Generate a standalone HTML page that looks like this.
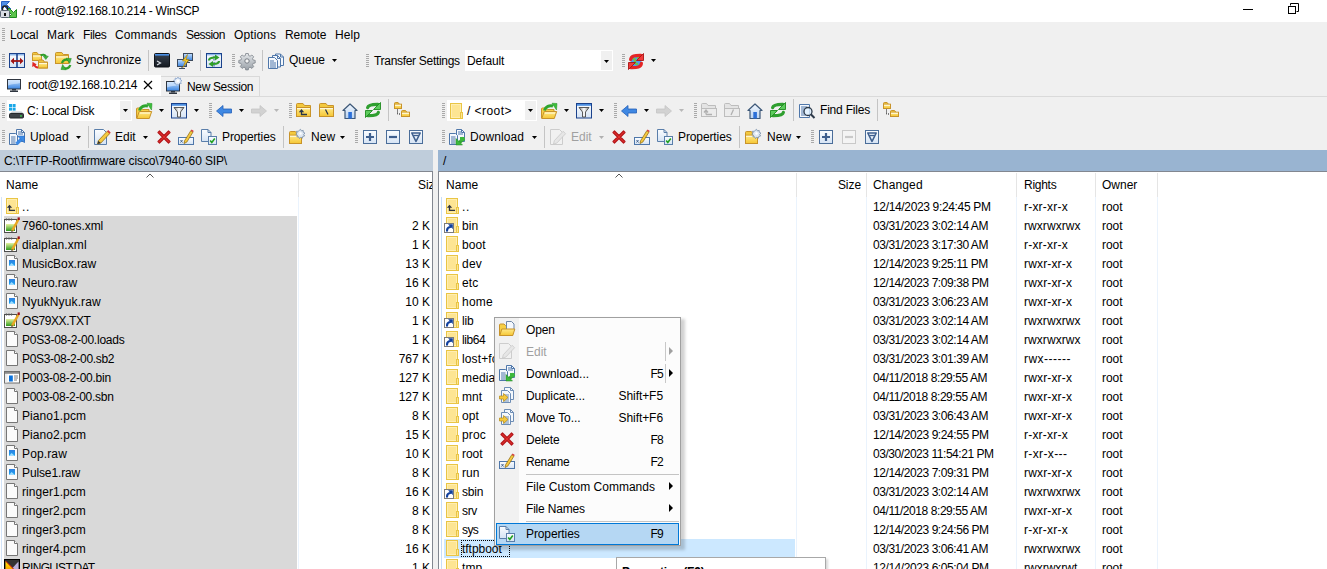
<!DOCTYPE html>
<html><head><meta charset="utf-8"><style>
html,body{margin:0;padding:0;}
body{width:1327px;height:569px;overflow:hidden;position:relative;background:#fff;font-family:"Liberation Sans", sans-serif;font-size:12px;color:#000;}
.t{position:absolute;white-space:nowrap;line-height:14px;height:14px;}
.r{position:absolute;}
.i{position:absolute;overflow:visible;}
</style></head><body>
<svg width="0" height="0" style="position:absolute"><defs>
<linearGradient id="gF" x1="0" y1="0" x2="0" y2="1"><stop offset="0" stop-color="#ffe98a"/><stop offset="1" stop-color="#f5c633"/></linearGradient>
<linearGradient id="gFL" x1="0" y1="0" x2="0" y2="1"><stop offset="0" stop-color="#fff0b5"/><stop offset="1" stop-color="#fbd96b"/></linearGradient>
<linearGradient id="gB" x1="0" y1="0" x2="0" y2="1"><stop offset="0" stop-color="#fbfdff"/><stop offset="1" stop-color="#d5e3f4"/></linearGradient>
<linearGradient id="gG" x1="0" y1="0" x2="0" y2="1"><stop offset="0" stop-color="#e4e7ea"/><stop offset="1" stop-color="#9aa1a8"/></linearGradient>
<linearGradient id="gM" x1="0" y1="0" x2="0" y2="1"><stop offset="0" stop-color="#c4e0ff"/><stop offset="1" stop-color="#3a84e0"/></linearGradient>
<linearGradient id="gT" x1="0" y1="0" x2="0" y2="1"><stop offset="0" stop-color="#3a4452"/><stop offset="1" stop-color="#151a21"/></linearGradient>
<linearGradient id="gFun" x1="0" y1="0" x2="1" y2="0"><stop offset="0" stop-color="#888"/><stop offset="0.5" stop-color="#fff"/><stop offset="1" stop-color="#888"/></linearGradient>
<linearGradient id="gH" x1="0" y1="0" x2="0" y2="1"><stop offset="0" stop-color="#f2f7fd"/><stop offset="1" stop-color="#b9d3f1"/></linearGradient>
<linearGradient id="gGr" x1="0" y1="0" x2="0" y2="1"><stop offset="0" stop-color="#7ee06a"/><stop offset="1" stop-color="#1f9a1f"/></linearGradient>
</defs></svg>
<div class="r" style="left:0px;top:0px;width:1327px;height:22px;background:#fff;"></div>
<svg class="i" style="left:0px;top:0px;" width="17" height="19" viewBox="0 0 17 19"><path d="M1.5 1.5h8l-3 3 4.5 4.5-2 2-4.5-4.5-3 3z" fill="#4f8fe8" stroke="#2a62c4"/><path d="M16.5 17.5h-8l3-3-4.5-4.5 2-2 4.5 4.5 3-3z" fill="#5cc44c" stroke="#1f8a1f"/><path d="M2.5 10.5v-2a2.5 2.5 0 0 1 5 0v2" fill="none" stroke="#222" stroke-width="1.5"/><rect x="0.5" y="10.5" width="9" height="7" rx="1" fill="#d8dce3" stroke="#5a6474"/><rect x="4" y="13" width="2" height="3" fill="#111"/></svg>
<div class="t" style="left:22px;top:4px;letter-spacing:-0.282px;">/ - root@192.168.10.214 - WinSCP</div>
<div class="r" style="left:1243px;top:9px;width:10px;height:1px;background:#000;"></div>
<svg class="i" style="left:1287px;top:3px;" width="13" height="12" viewBox="0 0 13 12"><path d="M3.5 2.5v-2h8v8h-2" fill="none" stroke="#000"/><rect x="1.5" y="3.5" width="7" height="7" fill="none" stroke="#000"/></svg>
<div class="r" style="left:0px;top:22px;width:1327px;height:75px;background:#f0f0f0;"></div>
<svg class="i" style="left:2px;top:28px;" width="3" height="13" viewBox="0 0 3 13"><rect x="0" y="0" width="3" height="1" fill="#a9a9a9"/><rect x="0" y="2" width="3" height="1" fill="#a9a9a9"/><rect x="0" y="4" width="3" height="1" fill="#a9a9a9"/><rect x="0" y="6" width="3" height="1" fill="#a9a9a9"/><rect x="0" y="8" width="3" height="1" fill="#a9a9a9"/><rect x="0" y="10" width="3" height="1" fill="#a9a9a9"/><rect x="0" y="12" width="3" height="1" fill="#a9a9a9"/></svg>
<div class="t" style="left:10px;top:28px;letter-spacing:-0.077px;">Local</div>
<div class="t" style="left:47px;top:28px;letter-spacing:0.207px;">Mark</div>
<div class="t" style="left:83px;top:28px;letter-spacing:-0.369px;">Files</div>
<div class="t" style="left:115px;top:28px;letter-spacing:0.105px;">Commands</div>
<div class="t" style="left:186px;top:28px;letter-spacing:-0.555px;">Session</div>
<div class="t" style="left:234px;top:28px;letter-spacing:0.108px;">Options</div>
<div class="t" style="left:285px;top:28px;letter-spacing:-0.103px;">Remote</div>
<div class="t" style="left:335px;top:28px;letter-spacing:0.078px;">Help</div>
<svg class="i" style="left:2px;top:54px;" width="3" height="14" viewBox="0 0 3 14"><rect x="0" y="0" width="3" height="1" fill="#a9a9a9"/><rect x="0" y="2" width="3" height="1" fill="#a9a9a9"/><rect x="0" y="4" width="3" height="1" fill="#a9a9a9"/><rect x="0" y="6" width="3" height="1" fill="#a9a9a9"/><rect x="0" y="8" width="3" height="1" fill="#a9a9a9"/><rect x="0" y="10" width="3" height="1" fill="#a9a9a9"/><rect x="0" y="12" width="3" height="1" fill="#a9a9a9"/></svg>
<svg class="i" style="left:9px;top:53px;" width="16" height="16" viewBox="0 0 16 16"><rect x="0.5" y="0.5" width="15" height="14" fill="url(#gB)" stroke="#1b428c"/><rect x="1" y="1" width="14" height="1.5" fill="#8fb8ea"/><path d="M8 1v13.5" stroke="#1b428c" stroke-width="1.6"/><path d="M4 8h8" stroke="#a01414" stroke-width="1.8"/><path d="M1.5 8l3.5-3.2v6.4zM14.5 8l-3.5-3.2v6.4z" fill="#a01414"/></svg>
<svg class="i" style="left:32px;top:53px;" width="16" height="16" viewBox="0 0 16 16"><g transform="translate(0,-1)"><path d="M0.5 8.5V1.5q0-1 1-1h3.5l1.5 2H9.5V8.5z" fill="#f3c93e" stroke="#c8932a"/><rect x="0.5" y="2.9" width="9" height="5.6" fill="url(#gF)" stroke="#c8932a"/><rect x="1" y="3.4" width="8" height="1.2" fill="#fff8d8"/></g><g transform="translate(6,6.5)"><path d="M0.5 8.5V1.5q0-1 1-1h3.5l1.5 2H9.5V8.5z" fill="#f3c93e" stroke="#c8932a"/><rect x="0.5" y="2.9" width="9" height="5.6" fill="url(#gF)" stroke="#c8932a"/><rect x="1" y="3.4" width="8" height="1.2" fill="#fff8d8"/></g><path d="M8.5 2.5C10.5 1.3 13 1.3 14 3.5" stroke="#2f9e2a" stroke-width="2" fill="none"/><path d="M11.3 3.2h5l-2.5 3.3z" fill="#3cb33c" stroke="#1f8a1f" stroke-width="0.5"/><path d="M6 14.5C4 14.5 2.8 13.5 2 11.5" stroke="#e02626" stroke-width="2" fill="none"/><path d="M0.2 14l0.3-5.2 4.2 2.6z" fill="#e02626"/></svg>
<svg class="i" style="left:55px;top:53px;" width="16" height="16" viewBox="0 0 16 16"><g transform="translate(0,-1)"><path d="M0.5 11.5V1.5q0-1 1-1h5.3l1.5 2H13.5V11.5z" fill="#f3c93e" stroke="#c8932a"/><rect x="0.5" y="3.8" width="13" height="7.7" fill="url(#gF)" stroke="#c8932a"/><rect x="1" y="4.3" width="12" height="1.2" fill="#fff8d8"/></g><path d="M7 10C8 6.8 11 6 13.5 7" stroke="#2f9e2a" stroke-width="2.4" fill="none"/><path d="M11 5.2l5.3 0.3-1.6 5z" fill="#3cb33c" stroke="#1f8a1f" stroke-width="0.5"/><path d="M15.3 12C14.3 15.2 11.3 16 8.8 15" stroke="#2f9e2a" stroke-width="2.4" fill="none"/><path d="M11.3 16.8l-5.3-0.3 1.6-5z" fill="#3cb33c" stroke="#1f8a1f" stroke-width="0.5"/></svg>
<div class="t" style="left:76px;top:53px;letter-spacing:-0.094px;">Synchronize</div>
<div class="r" style="left:148px;top:50px;width:1px;height:21px;background:#c4c4c4;"></div>
<svg class="i" style="left:154px;top:53px;" width="16" height="16" viewBox="0 0 16 16"><rect x="0.5" y="0.5" width="15" height="13.5" rx="1" fill="url(#gT)" stroke="#10151b"/><rect x="1" y="1" width="14" height="1.6" fill="#4a90e6"/><path d="M3 8l3.5 2-3.5 2" stroke="#d8dde3" stroke-width="1.2" fill="none"/></svg>
<svg class="i" style="left:177px;top:53px;" width="16" height="16" viewBox="0 0 16 16"><rect x="6.5" y="0.5" width="9" height="7" fill="url(#gM)" stroke="#3d4a5c"/><path d="M10 8v1.5h3" stroke="#3d4a5c"/><rect x="0.5" y="6.5" width="9" height="7" fill="url(#gM)" stroke="#3d4a5c"/><path d="M5 14v1M2 15.5h6" stroke="#3d4a5c"/><path d="M10.5 1.5l-5 6.5h3l-2.5 6.5 6-8h-3z" fill="#f7cc2a" stroke="#a77d08" stroke-width="0.6"/></svg>
<div class="r" style="left:200px;top:50px;width:1px;height:21px;background:#c4c4c4;"></div>
<svg class="i" style="left:206px;top:53px;" width="16" height="16" viewBox="0 0 16 16"><rect x="0.5" y="0.5" width="15" height="14" fill="url(#gB)" stroke="#1b428c"/><rect x="1" y="1" width="14" height="1.4" fill="#8fb8ea"/><path d="M8 3v11" stroke="#2c4f90" stroke-dasharray="1.5 1.5"/><path d="M3 7.5c0-2 2-3 6-3" stroke="#2f9e2a" stroke-width="2.2" fill="none"/><path d="M9 1.5l4.5 3-4.5 3z" fill="#2f9e2a"/><path d="M13 8c0 2-2 3-6 3" stroke="#2f9e2a" stroke-width="2.2" fill="none"/><path d="M7 8l-4.5 3 4.5 3z" fill="#2f9e2a"/></svg>
<svg class="i" style="left:232px;top:54px;" width="3" height="14" viewBox="0 0 3 14"><rect x="0" y="0" width="3" height="1" fill="#a9a9a9"/><rect x="0" y="2" width="3" height="1" fill="#a9a9a9"/><rect x="0" y="4" width="3" height="1" fill="#a9a9a9"/><rect x="0" y="6" width="3" height="1" fill="#a9a9a9"/><rect x="0" y="8" width="3" height="1" fill="#a9a9a9"/><rect x="0" y="10" width="3" height="1" fill="#a9a9a9"/><rect x="0" y="12" width="3" height="1" fill="#a9a9a9"/></svg>
<svg class="i" style="left:239px;top:53px;" width="16" height="16" viewBox="0 0 16 16"><g transform="translate(8,8)"><path d="M-1.3-7.5h2.6l0.4 2.1 1.4 0.6 1.8-1.2 1.8 1.8-1.2 1.8 0.6 1.4 2.1 0.4v2.6l-2.1 0.4-0.6 1.4 1.2 1.8-1.8 1.8-1.8-1.2-1.4 0.6-0.4 2.1h-2.6l-0.4-2.1-1.4-0.6-1.8 1.2-1.8-1.8 1.2-1.8-0.6-1.4-2.1-0.4v-2.6l2.1-0.4 0.6-1.4-1.2-1.8 1.8-1.8 1.8 1.2 1.4-0.6z" fill="url(#gG)" stroke="#7d848c" stroke-width="0.8"/><circle r="2.2" fill="#f4f4f4" stroke="#6c737b" stroke-width="0.9"/></g></svg>
<div class="r" style="left:262px;top:50px;width:1px;height:21px;background:#c4c4c4;"></div>
<svg class="i" style="left:268px;top:53px;" width="16" height="16" viewBox="0 0 16 16"><g transform="translate(7,0.5)"><path d="M0.5 0.5h5l3 3v8.5h-8z" fill="#f4f8fd" stroke="#4f77aa"/><path d="M5.5 0.5v3h3" fill="none" stroke="#4f77aa"/></g><g transform="translate(4,2)"><path d="M0.5 0.5h5l3 3v8.5h-8z" fill="#f4f8fd" stroke="#4f77aa"/><path d="M5.5 0.5v3h3" fill="none" stroke="#4f77aa"/></g><path d="M0.5 4.5h6l3 3v8h-9z" fill="#f4f8fd" stroke="#4f77aa"/><path d="M2 8h4M2 10h6M2 12h6M2 14h6" stroke="#4f77aa"/></svg>
<div class="t" style="left:289px;top:53px;">Queue</div>
<svg class="i" style="left:332px;top:59px;" width="5" height="3" viewBox="0 0 5 3"><path d="M0 0h5l-2.5 3z" fill="#000"/></svg>
<svg class="i" style="left:366px;top:54px;" width="3" height="14" viewBox="0 0 3 14"><rect x="0" y="0" width="3" height="1" fill="#a9a9a9"/><rect x="0" y="2" width="3" height="1" fill="#a9a9a9"/><rect x="0" y="4" width="3" height="1" fill="#a9a9a9"/><rect x="0" y="6" width="3" height="1" fill="#a9a9a9"/><rect x="0" y="8" width="3" height="1" fill="#a9a9a9"/><rect x="0" y="10" width="3" height="1" fill="#a9a9a9"/><rect x="0" y="12" width="3" height="1" fill="#a9a9a9"/></svg>
<div class="t" style="left:374px;top:54px;letter-spacing:-0.306px;">Transfer Settings</div>
<div class="r" style="left:465px;top:50px;width:148px;height:21px;background:#fff;"></div>
<div class="r" style="left:601px;top:51px;width:11px;height:19px;background:#f0f0f0;"></div>
<svg class="i" style="left:604px;top:60px;" width="5" height="3" viewBox="0 0 5 3"><path d="M0 0h5l-2.5 3z" fill="#000"/></svg>
<div class="t" style="left:467px;top:54px;letter-spacing:-0.097px;">Default</div>
<svg class="i" style="left:622px;top:54px;" width="3" height="14" viewBox="0 0 3 14"><rect x="0" y="0" width="3" height="1" fill="#a9a9a9"/><rect x="0" y="2" width="3" height="1" fill="#a9a9a9"/><rect x="0" y="4" width="3" height="1" fill="#a9a9a9"/><rect x="0" y="6" width="3" height="1" fill="#a9a9a9"/><rect x="0" y="8" width="3" height="1" fill="#a9a9a9"/><rect x="0" y="10" width="3" height="1" fill="#a9a9a9"/><rect x="0" y="12" width="3" height="1" fill="#a9a9a9"/></svg>
<svg class="i" style="left:628px;top:53px;" width="16" height="16" viewBox="0 0 16 16"><circle cx="8" cy="8.5" r="5.3" fill="#4f9cf0"/><path d="M4.5 6c1.5-0.5 3 0.5 2.5 2.5s1.5 3 3 2M9.5 4c0.5 1.5 2.5 1.5 3 3.5" stroke="#6cc24a" stroke-width="2.4" fill="none"/><path d="M2.6 6.6C3.2 2.8 6.5 2.2 13 2.3" stroke="#e42525" stroke-width="3.2" fill="none" stroke-linecap="round"/><path d="M15.5 0.5v7h-7z" fill="#f03a3a" stroke="#a81414" stroke-width="0.9" stroke-linejoin="round"/><path d="M13.4 10.4C12.8 14.2 9.5 14.8 3 14.7" stroke="#e42525" stroke-width="3.2" fill="none" stroke-linecap="round"/><path d="M0.5 16.5v-7h7z" fill="#f03a3a" stroke="#a81414" stroke-width="0.9" stroke-linejoin="round"/></svg>
<svg class="i" style="left:651px;top:59px;" width="5" height="3" viewBox="0 0 5 3"><path d="M0 0h5l-2.5 3z" fill="#000"/></svg>
<div class="r" style="left:0px;top:75px;width:161px;height:22px;background:#fff;"></div>
<svg class="i" style="left:7px;top:79px;" width="14" height="14" viewBox="0 0 14 14"><rect x="0.5" y="0.5" width="13" height="9.5" fill="url(#gM)" stroke="#2f3640"/><path d="M1 1h12v3c-4 1.5-8 0.5-12 2.5z" fill="#e3f0ff" opacity="0.55"/><rect x="5" y="10" width="4" height="1.5" fill="#2f3640"/><rect x="3" y="11.5" width="8" height="1.5" fill="#2f3640"/></svg>
<div class="t" style="left:28px;top:78px;letter-spacing:-0.381px;">root@192.168.10.214</div>
<svg class="i" style="left:143px;top:80px;" width="10" height="10" viewBox="0 0 10 10"><path d="M1 1l8 8M9 1l-8 8" stroke="#000" stroke-width="1.2"/></svg>
<div class="r" style="left:161px;top:76px;width:99px;height:21px;background:#f0f0f0;box-sizing:border-box;border:1px solid #d9d9d9;border-left:none;"></div>
<svg class="i" style="left:166px;top:81px;" width="16" height="14" viewBox="0 0 16 14"><rect x="0.5" y="0.5" width="13" height="9.5" fill="url(#gM)" stroke="#2f3640"/><path d="M1 1h12v3c-4 1.5-8 0.5-12 2.5z" fill="#e3f0ff" opacity="0.55"/><rect x="5" y="10" width="4" height="1.5" fill="#2f3640"/><rect x="3" y="11.5" width="8" height="1.5" fill="#2f3640"/><g transform="translate(8,-4)"><path d="M4 0l0.8 1.6 1.8-0.6-0.3 1.8 1.7 0.9-1.5 1.1 0.8 1.7-1.9 0-0.5 1.8-1.3-1.3-1.4 1.2-0.3-1.8-1.9-0.2 0.9-1.6-1.4-1.2 1.8-0.6-0.1-1.8 1.7 0.7z" fill="#e8f0fa" stroke="#6d8fbf" stroke-width="0.6"/><circle cx="4" cy="4" r="1.3" fill="#fff"/></g></svg>
<div class="t" style="left:187px;top:80px;letter-spacing:-0.357px;">New Session</div>
<div class="r" style="left:0px;top:96px;width:1327px;height:1px;background:#dadada;"></div>
<div class="r" style="left:0px;top:97px;width:1327px;height:53px;background:#f0f0f0;"></div>
<svg class="i" style="left:2px;top:103px;" width="3" height="15" viewBox="0 0 3 15"><rect x="0" y="0" width="3" height="1" fill="#a9a9a9"/><rect x="0" y="2" width="3" height="1" fill="#a9a9a9"/><rect x="0" y="4" width="3" height="1" fill="#a9a9a9"/><rect x="0" y="6" width="3" height="1" fill="#a9a9a9"/><rect x="0" y="8" width="3" height="1" fill="#a9a9a9"/><rect x="0" y="10" width="3" height="1" fill="#a9a9a9"/><rect x="0" y="12" width="3" height="1" fill="#a9a9a9"/><rect x="0" y="14" width="3" height="1" fill="#a9a9a9"/></svg>
<div class="r" style="left:7px;top:100px;width:125px;height:21px;background:#fff;"></div>
<div class="r" style="left:120px;top:101px;width:11px;height:19px;background:#f0f0f0;"></div>
<svg class="i" style="left:123px;top:109px;" width="5" height="3" viewBox="0 0 5 3"><path d="M0 0h5l-2.5 3z" fill="#000"/></svg>
<svg class="i" style="left:8px;top:103px;" width="16" height="16" viewBox="0 0 16 16"><rect x="1" y="1" width="3" height="3" fill="#1aa7e8"/><rect x="4.6" y="1" width="3" height="3" fill="#1aa7e8"/><rect x="1" y="4.6" width="3" height="3" fill="#1aa7e8"/><rect x="4.6" y="4.6" width="3" height="3" fill="#1aa7e8"/><path d="M2 10.5l2-2h9.5l2 2z" fill="#c4c8cc"/><rect x="1.5" y="10.5" width="14" height="4.5" rx="1" fill="#3e4247" stroke="#26292d"/><rect x="12" y="12.3" width="2" height="1.3" fill="#3ad14e"/></svg>
<div class="t" style="left:27px;top:104px;letter-spacing:-0.261px;">C: Local Disk</div>
<svg class="i" style="left:136px;top:103px;" width="16" height="16" viewBox="0 0 16 16"><path d="M0.5 15V6q0-1 1-1h3.5l1.5 1.5h6.5v8.5z" fill="#f7cf45" stroke="#c8932a"/><path d="M0.8 15.5l2.4-7h12.5l-2.4 7z" fill="url(#gF)" stroke="#c8932a"/><rect x="4" y="9.5" width="10" height="1.2" fill="#fff6cf"/><path d="M3.5 7.5c1-4 5-5.5 8.5-4.5" stroke="#2ea52e" stroke-width="3" fill="none"/><path d="M11 0.2l5 0.3-0.5 6.5z" fill="#3bbf3b" stroke="#1d8a1d" stroke-width="0.5"/></svg>
<svg class="i" style="left:159px;top:109px;" width="5" height="3" viewBox="0 0 5 3"><path d="M0 0h5l-2.5 3z" fill="#000"/></svg>
<svg class="i" style="left:171px;top:103px;" width="16" height="16" viewBox="0 0 16 16"><rect x="0.5" y="0.5" width="15" height="14.5" fill="url(#gB)" stroke="#1b428c"/><rect x="1" y="1" width="14" height="1.8" fill="#4d8fe0"/><path d="M3 4.5h10l-3.5 4.5v5h-3v-5z" fill="url(#gFun)" stroke="#4a4a4a" stroke-width="0.9"/></svg>
<svg class="i" style="left:194px;top:109px;" width="5" height="3" viewBox="0 0 5 3"><path d="M0 0h5l-2.5 3z" fill="#000"/></svg>
<svg class="i" style="left:209px;top:103px;" width="3" height="15" viewBox="0 0 3 15"><rect x="0" y="0" width="3" height="1" fill="#a9a9a9"/><rect x="0" y="2" width="3" height="1" fill="#a9a9a9"/><rect x="0" y="4" width="3" height="1" fill="#a9a9a9"/><rect x="0" y="6" width="3" height="1" fill="#a9a9a9"/><rect x="0" y="8" width="3" height="1" fill="#a9a9a9"/><rect x="0" y="10" width="3" height="1" fill="#a9a9a9"/><rect x="0" y="12" width="3" height="1" fill="#a9a9a9"/><rect x="0" y="14" width="3" height="1" fill="#a9a9a9"/></svg>
<svg class="i" style="left:216px;top:103px;" width="16" height="16" viewBox="0 0 16 16"><path d="M0.5 8l6.5-5.5v3.5h8.5v4h-8.5v3.5z" fill="#3f88e3" stroke="#2360b8" stroke-width="0.8"/></svg>
<svg class="i" style="left:239px;top:109px;" width="5" height="3" viewBox="0 0 5 3"><path d="M0 0h5l-2.5 3z" fill="#000"/></svg>
<svg class="i" style="left:251px;top:103px;" width="16" height="16" viewBox="0 0 16 16"><path d="M15.5 8l-6.5-5.5v3.5h-8.5v4h8.5v3.5z" fill="#d2d2d2" stroke="#c4c4c4" stroke-width="0.8"/></svg>
<svg class="i" style="left:274px;top:109px;" width="5" height="3" viewBox="0 0 5 3"><path d="M0 0h5l-2.5 3z" fill="#b8b8b8"/></svg>
<svg class="i" style="left:289px;top:103px;" width="3" height="15" viewBox="0 0 3 15"><rect x="0" y="0" width="3" height="1" fill="#a9a9a9"/><rect x="0" y="2" width="3" height="1" fill="#a9a9a9"/><rect x="0" y="4" width="3" height="1" fill="#a9a9a9"/><rect x="0" y="6" width="3" height="1" fill="#a9a9a9"/><rect x="0" y="8" width="3" height="1" fill="#a9a9a9"/><rect x="0" y="10" width="3" height="1" fill="#a9a9a9"/><rect x="0" y="12" width="3" height="1" fill="#a9a9a9"/><rect x="0" y="14" width="3" height="1" fill="#a9a9a9"/></svg>
<svg class="i" style="left:296px;top:103px;" width="16" height="16" viewBox="0 0 16 16"><g transform="translate(0,0)"><path d="M0.5 13.5V1.5q0-1 1-1h5.5l1.5 2H14.5V13.5z" fill="#f3c93e" stroke="#c8932a"/><rect x="0.5" y="4.5" width="14" height="9.0" fill="url(#gF)" stroke="#c8932a"/><rect x="1" y="5.0" width="13" height="1.2" fill="#fff8d8"/></g><path d="M2.8 9.2L5.5 6 8.2 9.2z" fill="#27344a"/><path d="M5.5 8V11.5H11" stroke="#27344a" stroke-width="1.3" fill="none"/></svg>
<svg class="i" style="left:319px;top:103px;" width="16" height="16" viewBox="0 0 16 16"><g transform="translate(0,0)"><path d="M0.5 13.5V1.5q0-1 1-1h5.5l1.5 2H14.5V13.5z" fill="#f3c93e" stroke="#c8932a"/><rect x="0.5" y="4.5" width="14" height="9.0" fill="url(#gF)" stroke="#c8932a"/><rect x="1" y="5.0" width="13" height="1.2" fill="#fff8d8"/></g><path d="M6.5 6.5l2.5 5" stroke="#27344a" stroke-width="1.3"/></svg>
<svg class="i" style="left:342px;top:103px;" width="16" height="16" viewBox="0 0 16 16"><path d="M8 1l7 6.5h-2v8h-10v-8h-2z" fill="url(#gH)" stroke="#3d5878" stroke-width="1.2" stroke-linejoin="round"/><rect x="6.3" y="9" width="3.6" height="6.5" fill="#2b6fd8"/></svg>
<svg class="i" style="left:365px;top:102px;" width="16" height="16" viewBox="0 0 16 16"><path d="M2.6 5.6C3.2 2.8 6.5 2.2 13 2.3" stroke="#2f9f2f" stroke-width="3.2" fill="none" stroke-linecap="round"/><path d="M15.5 0.5v7h-7z" fill="#5ccc5c" stroke="#1f8a1f" stroke-width="0.9" stroke-linejoin="round"/><path d="M13.4 10.4C12.8 13.2 9.5 13.8 3 13.7" stroke="#2f9f2f" stroke-width="3.2" fill="none" stroke-linecap="round"/><path d="M0.5 15.5v-7h7z" fill="#5ccc5c" stroke="#1f8a1f" stroke-width="0.9" stroke-linejoin="round"/></svg>
<div class="r" style="left:388px;top:99px;width:1px;height:22px;background:#c4c4c4;"></div>
<svg class="i" style="left:394px;top:102px;" width="16" height="16" viewBox="0 0 16 16"><g transform="translate(0,0)"><path d="M0.5 6.5V1.5q0-1 1-1h2.6l1.5 2H7.5V6.5z" fill="#f3c93e" stroke="#c8932a"/><rect x="0.5" y="2.2" width="7" height="4.3" fill="url(#gF)" stroke="#c8932a"/><rect x="1" y="2.7" width="6" height="1.2" fill="#fff8d8"/></g><g transform="translate(7,8)"><path d="M0.5 6.5V1.5q0-1 1-1h3.05l1.5 2H8.5V6.5z" fill="#f3c93e" stroke="#c8932a"/><rect x="0.5" y="2.2" width="8" height="4.3" fill="url(#gF)" stroke="#c8932a"/><rect x="1" y="2.7" width="7" height="1.2" fill="#fff8d8"/></g><path d="M3.5 7.5v4.5h3.5" stroke="#111" stroke-dasharray="1 1" fill="none"/></svg>
<svg class="i" style="left:442px;top:103px;" width="3" height="15" viewBox="0 0 3 15"><rect x="0" y="0" width="3" height="1" fill="#a9a9a9"/><rect x="0" y="2" width="3" height="1" fill="#a9a9a9"/><rect x="0" y="4" width="3" height="1" fill="#a9a9a9"/><rect x="0" y="6" width="3" height="1" fill="#a9a9a9"/><rect x="0" y="8" width="3" height="1" fill="#a9a9a9"/><rect x="0" y="10" width="3" height="1" fill="#a9a9a9"/><rect x="0" y="12" width="3" height="1" fill="#a9a9a9"/><rect x="0" y="14" width="3" height="1" fill="#a9a9a9"/></svg>
<div class="r" style="left:447px;top:100px;width:90px;height:21px;background:#fff;"></div>
<div class="r" style="left:525px;top:101px;width:11px;height:19px;background:#f0f0f0;"></div>
<svg class="i" style="left:528px;top:109px;" width="5" height="3" viewBox="0 0 5 3"><path d="M0 0h5l-2.5 3z" fill="#000"/></svg>
<svg class="i" style="left:450px;top:103px;" width="16" height="16" viewBox="0 0 16 16"><rect x="0.5" y="0.5" width="11" height="15" fill="#fde593" stroke="#e9c545"/><rect x="1.5" y="1.5" width="9" height="13" fill="none" stroke="#fff0b8" stroke-width="0.8"/><rect x="10.5" y="9.5" width="2" height="6" fill="#fde593" stroke="#e9c545"/></svg>
<div class="t" style="left:467px;top:104px;letter-spacing:0.455px;">/ &lt;root&gt;</div>
<svg class="i" style="left:541px;top:103px;" width="16" height="16" viewBox="0 0 16 16"><path d="M0.5 15V6q0-1 1-1h3.5l1.5 1.5h6.5v8.5z" fill="#f7cf45" stroke="#c8932a"/><path d="M0.8 15.5l2.4-7h12.5l-2.4 7z" fill="url(#gF)" stroke="#c8932a"/><rect x="4" y="9.5" width="10" height="1.2" fill="#fff6cf"/><path d="M3.5 7.5c1-4 5-5.5 8.5-4.5" stroke="#2ea52e" stroke-width="3" fill="none"/><path d="M11 0.2l5 0.3-0.5 6.5z" fill="#3bbf3b" stroke="#1d8a1d" stroke-width="0.5"/></svg>
<svg class="i" style="left:564px;top:109px;" width="5" height="3" viewBox="0 0 5 3"><path d="M0 0h5l-2.5 3z" fill="#000"/></svg>
<svg class="i" style="left:576px;top:103px;" width="16" height="16" viewBox="0 0 16 16"><rect x="0.5" y="0.5" width="15" height="14.5" fill="url(#gB)" stroke="#1b428c"/><rect x="1" y="1" width="14" height="1.8" fill="#4d8fe0"/><path d="M3 4.5h10l-3.5 4.5v5h-3v-5z" fill="url(#gFun)" stroke="#4a4a4a" stroke-width="0.9"/></svg>
<svg class="i" style="left:599px;top:109px;" width="5" height="3" viewBox="0 0 5 3"><path d="M0 0h5l-2.5 3z" fill="#000"/></svg>
<svg class="i" style="left:614px;top:103px;" width="3" height="15" viewBox="0 0 3 15"><rect x="0" y="0" width="3" height="1" fill="#a9a9a9"/><rect x="0" y="2" width="3" height="1" fill="#a9a9a9"/><rect x="0" y="4" width="3" height="1" fill="#a9a9a9"/><rect x="0" y="6" width="3" height="1" fill="#a9a9a9"/><rect x="0" y="8" width="3" height="1" fill="#a9a9a9"/><rect x="0" y="10" width="3" height="1" fill="#a9a9a9"/><rect x="0" y="12" width="3" height="1" fill="#a9a9a9"/><rect x="0" y="14" width="3" height="1" fill="#a9a9a9"/></svg>
<svg class="i" style="left:621px;top:103px;" width="16" height="16" viewBox="0 0 16 16"><path d="M0.5 8l6.5-5.5v3.5h8.5v4h-8.5v3.5z" fill="#3f88e3" stroke="#2360b8" stroke-width="0.8"/></svg>
<svg class="i" style="left:644px;top:109px;" width="5" height="3" viewBox="0 0 5 3"><path d="M0 0h5l-2.5 3z" fill="#000"/></svg>
<svg class="i" style="left:656px;top:103px;" width="16" height="16" viewBox="0 0 16 16"><path d="M15.5 8l-6.5-5.5v3.5h-8.5v4h8.5v3.5z" fill="#d2d2d2" stroke="#c4c4c4" stroke-width="0.8"/></svg>
<svg class="i" style="left:679px;top:109px;" width="5" height="3" viewBox="0 0 5 3"><path d="M0 0h5l-2.5 3z" fill="#b8b8b8"/></svg>
<svg class="i" style="left:694px;top:103px;" width="3" height="15" viewBox="0 0 3 15"><rect x="0" y="0" width="3" height="1" fill="#a9a9a9"/><rect x="0" y="2" width="3" height="1" fill="#a9a9a9"/><rect x="0" y="4" width="3" height="1" fill="#a9a9a9"/><rect x="0" y="6" width="3" height="1" fill="#a9a9a9"/><rect x="0" y="8" width="3" height="1" fill="#a9a9a9"/><rect x="0" y="10" width="3" height="1" fill="#a9a9a9"/><rect x="0" y="12" width="3" height="1" fill="#a9a9a9"/><rect x="0" y="14" width="3" height="1" fill="#a9a9a9"/></svg>
<svg class="i" style="left:701px;top:103px;" width="16" height="16" viewBox="0 0 16 16"><g transform="translate(0,0)"><path d="M0.5 13.5V1.5q0-1 1-1h4l1.5 2h7.5v11z" fill="#e4e4e4" stroke="#bdbdbd"/><rect x="0.5" y="5.5" width="15" height="8" fill="#ececec" stroke="#bdbdbd"/></g><path d="M5 11.5h6M5 11.5v-3.5M3 9.5l2-2.5 2 2.5" stroke="#b0b0b0" stroke-width="1.3" fill="none"/></svg>
<svg class="i" style="left:724px;top:103px;" width="16" height="16" viewBox="0 0 16 16"><g transform="translate(0,0)"><path d="M0.5 13.5V1.5q0-1 1-1h4l1.5 2h7.5v11z" fill="#e4e4e4" stroke="#bdbdbd"/><rect x="0.5" y="5.5" width="15" height="8" fill="#ececec" stroke="#bdbdbd"/></g><path d="M9.5 6.5l-2.5 5.5" stroke="#b0b0b0" stroke-width="1.3"/></svg>
<svg class="i" style="left:747px;top:103px;" width="16" height="16" viewBox="0 0 16 16"><path d="M8 1l7 6.5h-2v8h-10v-8h-2z" fill="url(#gH)" stroke="#3d5878" stroke-width="1.2" stroke-linejoin="round"/><rect x="6.3" y="9" width="3.6" height="6.5" fill="#2b6fd8"/></svg>
<svg class="i" style="left:770px;top:102px;" width="16" height="16" viewBox="0 0 16 16"><path d="M2.6 5.6C3.2 2.8 6.5 2.2 13 2.3" stroke="#2f9f2f" stroke-width="3.2" fill="none" stroke-linecap="round"/><path d="M15.5 0.5v7h-7z" fill="#5ccc5c" stroke="#1f8a1f" stroke-width="0.9" stroke-linejoin="round"/><path d="M13.4 10.4C12.8 13.2 9.5 13.8 3 13.7" stroke="#2f9f2f" stroke-width="3.2" fill="none" stroke-linecap="round"/><path d="M0.5 15.5v-7h7z" fill="#5ccc5c" stroke="#1f8a1f" stroke-width="0.9" stroke-linejoin="round"/></svg>
<div class="r" style="left:793px;top:99px;width:1px;height:22px;background:#c4c4c4;"></div>
<svg class="i" style="left:799px;top:103px;" width="16" height="16" viewBox="0 0 16 16"><path d="M0.5 1.5h10v13h-10z" fill="#f4f8fd" stroke="#4f77aa"/><path d="M2 4h6M2 6h4M2 8h4M2 10h4M2 12h5" stroke="#4f77aa"/><circle cx="9" cy="8.5" r="4" fill="#dff0ff" fill-opacity="0.8" stroke="#2d3a4a" stroke-width="1.3"/><path d="M11.8 11.3l3.7 3.7" stroke="#2d3a4a" stroke-width="2"/></svg>
<div class="t" style="left:820px;top:103px;letter-spacing:-0.202px;">Find Files</div>
<div class="r" style="left:877px;top:99px;width:1px;height:22px;background:#c4c4c4;"></div>
<svg class="i" style="left:883px;top:102px;" width="16" height="16" viewBox="0 0 16 16"><g transform="translate(0,0)"><path d="M0.5 6.5V1.5q0-1 1-1h2.6l1.5 2H7.5V6.5z" fill="#f3c93e" stroke="#c8932a"/><rect x="0.5" y="2.2" width="7" height="4.3" fill="url(#gF)" stroke="#c8932a"/><rect x="1" y="2.7" width="6" height="1.2" fill="#fff8d8"/></g><g transform="translate(7,8)"><path d="M0.5 6.5V1.5q0-1 1-1h3.05l1.5 2H8.5V6.5z" fill="#f3c93e" stroke="#c8932a"/><rect x="0.5" y="2.2" width="8" height="4.3" fill="url(#gF)" stroke="#c8932a"/><rect x="1" y="2.7" width="7" height="1.2" fill="#fff8d8"/></g><path d="M3.5 7.5v4.5h3.5" stroke="#111" stroke-dasharray="1 1" fill="none"/></svg>
<svg class="i" style="left:2px;top:130px;" width="3" height="14" viewBox="0 0 3 14"><rect x="0" y="0" width="3" height="1" fill="#a9a9a9"/><rect x="0" y="2" width="3" height="1" fill="#a9a9a9"/><rect x="0" y="4" width="3" height="1" fill="#a9a9a9"/><rect x="0" y="6" width="3" height="1" fill="#a9a9a9"/><rect x="0" y="8" width="3" height="1" fill="#a9a9a9"/><rect x="0" y="10" width="3" height="1" fill="#a9a9a9"/><rect x="0" y="12" width="3" height="1" fill="#a9a9a9"/></svg>
<svg class="i" style="left:9px;top:129px;" width="16" height="16" viewBox="0 0 16 16"><path d="M7.5 0.5h5l3 3v9h-8z" fill="#f4f8fd" stroke="#4f77aa"/><path d="M12.5 0.5v3h3" fill="none" stroke="#4f77aa"/><path d="M9 3h3M9 5h5" stroke="#4f77aa"/><path d="M0.5 4.5h6l2 2v9h-8z" fill="#f4f8fd" stroke="#4f77aa"/><path d="M2 8h4.5M2 10h4.5M2 12h4.5M2 14h4.5" stroke="#4f77aa"/><path d="M7.5 15l5-5" stroke="#3c8ae6" stroke-width="3.2"/><path d="M15.5 7v7l-7-7z" fill="#3c8ae6" stroke="#2465b8" stroke-width="0.5"/></svg>
<div class="t" style="left:30px;top:130px;letter-spacing:0.111px;">Upload</div>
<svg class="i" style="left:76px;top:136px;" width="5" height="3" viewBox="0 0 5 3"><path d="M0 0h5l-2.5 3z" fill="#000"/></svg>
<div class="r" style="left:88px;top:126px;width:1px;height:22px;background:#c4c4c4;"></div>
<svg class="i" style="left:94px;top:129px;" width="16" height="16" viewBox="0 0 16 16"><path d="M0.5 0.5h9l3 3v12h-12z" fill="url(#gB)" stroke="#5a7eaa"/><path d="M3.5 15l0.8-3.3 8.8-9.4 2.5 2.4-8.8 9.4z" fill="#f5c93f" stroke="#8a6308" stroke-width="0.7"/><path d="M13.1 2.3l1.1-1.2 2.5 2.4-1.1 1.2z" fill="#d8383a"/><path d="M3.5 15l0.8-3.3 2.5 2.4z" fill="#333"/></svg>
<div class="t" style="left:115px;top:130px;">Edit</div>
<svg class="i" style="left:143px;top:136px;" width="5" height="3" viewBox="0 0 5 3"><path d="M0 0h5l-2.5 3z" fill="#000"/></svg>
<svg class="i" style="left:156px;top:129px;" width="16" height="16" viewBox="0 0 16 16"><path d="M2 3.5l1.5-1.5 4.5 4.5 4.5-4.5 1.5 1.5-4.5 4.5 4.5 4.5-1.5 1.5-4.5-4.5-4.5 4.5-1.5-1.5 4.5-4.5z" fill="#e8302c" stroke="#b3161a" stroke-width="1.2" stroke-linejoin="round"/></svg>
<svg class="i" style="left:178px;top:129px;" width="16" height="16" viewBox="0 0 16 16"><rect x="0.5" y="8.5" width="15" height="7" fill="url(#gB)" stroke="#4f77aa"/><path d="M2.5 11l2 2.5M4.5 11l-2 2.5" stroke="#3a5a86" stroke-width="0.9"/><path d="M6 14.5l0.6-2.8 6.2-10 2.2 1.4-6.2 10z" fill="#f5c93f" stroke="#8a6308" stroke-width="0.7"/><path d="M12.8 1.7l0.8-1.2 2.2 1.4-0.8 1.2z" fill="#d8383a"/></svg>
<svg class="i" style="left:201px;top:129px;" width="16" height="16" viewBox="0 0 16 16"><path d="M0.5 0.5h6.5l3 3v9h-9.5z" fill="url(#gB)" stroke="#5a7eaa"/><path d="M7 0.5v3h3" fill="none" stroke="#5a7eaa"/><rect x="7.5" y="7.5" width="8" height="8" fill="url(#gB)" stroke="#5a7eaa"/><path d="M9.2 11.5l1.6 2 3-4" stroke="#1fa01f" stroke-width="1.6" fill="none"/></svg>
<div class="t" style="left:222px;top:130px;letter-spacing:-0.109px;">Properties</div>
<div class="r" style="left:283px;top:126px;width:1px;height:22px;background:#c4c4c4;"></div>
<svg class="i" style="left:289px;top:129px;" width="16" height="16" viewBox="0 0 16 16"><g transform="translate(0,2)"><path d="M0.5 12.5V1.5q0-1 1-1h4.8500000000000005l1.5 2H12.5V12.5z" fill="#f3c93e" stroke="#c8932a"/><rect x="0.5" y="4.2" width="12" height="8.3" fill="url(#gF)" stroke="#c8932a"/><rect x="1" y="4.7" width="11" height="1.2" fill="#fff8d8"/></g><path d="M11.5 0.3l0.9 1.6 1.8-0.5 0 1.8 1.7 0.8-1.2 1.4 0.9 1.6-1.8 0.4-0.4 1.8-1.6-0.9-1.4 1.2-0.7-1.7-1.8 0.1 0.5-1.8-1.6-0.9 1.4-1.2-0.8-1.7 1.8 0z" fill="#dfe8f3" stroke="#667f9e" stroke-width="0.7"/><circle cx="11.5" cy="4.5" r="1.2" fill="#fff"/></svg>
<div class="t" style="left:311px;top:130px;letter-spacing:0.128px;">New</div>
<svg class="i" style="left:340px;top:136px;" width="5" height="3" viewBox="0 0 5 3"><path d="M0 0h5l-2.5 3z" fill="#000"/></svg>
<svg class="i" style="left:355px;top:130px;" width="3" height="14" viewBox="0 0 3 14"><rect x="0" y="0" width="3" height="1" fill="#a9a9a9"/><rect x="0" y="2" width="3" height="1" fill="#a9a9a9"/><rect x="0" y="4" width="3" height="1" fill="#a9a9a9"/><rect x="0" y="6" width="3" height="1" fill="#a9a9a9"/><rect x="0" y="8" width="3" height="1" fill="#a9a9a9"/><rect x="0" y="10" width="3" height="1" fill="#a9a9a9"/><rect x="0" y="12" width="3" height="1" fill="#a9a9a9"/></svg>
<svg class="i" style="left:363px;top:130px;" width="14" height="14" viewBox="0 0 14 14"><rect x="0.5" y="0.5" width="13" height="13" fill="url(#gB)" stroke="#4a6d99"/><path d="M7 3v8M3 7h8" stroke="#3e5f8e" stroke-width="2.2"/></svg>
<svg class="i" style="left:386px;top:130px;" width="14" height="14" viewBox="0 0 14 14"><rect x="0.5" y="0.5" width="13" height="13" fill="url(#gB)" stroke="#4a6d99"/><path d="M3 7h8" stroke="#3e5f8e" stroke-width="2.2"/></svg>
<svg class="i" style="left:409px;top:130px;" width="14" height="14" viewBox="0 0 14 14"><rect x="0.5" y="0.5" width="13" height="13" fill="url(#gB)" stroke="#4a6d99"/><path d="M2.8 3h8.4l-4.2 8.5z" fill="none" stroke="#3e5f8e" stroke-width="1.6" stroke-linejoin="round"/><path d="M4.3 5.5h5.4" stroke="#3e5f8e" stroke-width="1.3"/></svg>
<svg class="i" style="left:442px;top:130px;" width="3" height="14" viewBox="0 0 3 14"><rect x="0" y="0" width="3" height="1" fill="#a9a9a9"/><rect x="0" y="2" width="3" height="1" fill="#a9a9a9"/><rect x="0" y="4" width="3" height="1" fill="#a9a9a9"/><rect x="0" y="6" width="3" height="1" fill="#a9a9a9"/><rect x="0" y="8" width="3" height="1" fill="#a9a9a9"/><rect x="0" y="10" width="3" height="1" fill="#a9a9a9"/><rect x="0" y="12" width="3" height="1" fill="#a9a9a9"/></svg>
<svg class="i" style="left:449px;top:129px;" width="16" height="16" viewBox="0 0 16 16"><path d="M7.5 0.5h5l3 3v9h-8z" fill="#f4f8fd" stroke="#4f77aa"/><path d="M12.5 0.5v3h3" fill="none" stroke="#4f77aa"/><path d="M9 3h3M9 5h5" stroke="#4f77aa"/><path d="M0.5 4.5h6l2 2v9h-8z" fill="#f4f8fd" stroke="#4f77aa"/><path d="M2 8h4.5M2 10h4.5M2 12h4.5M2 14h4.5" stroke="#4f77aa"/><path d="M15 9l-4.5 4.5" stroke="#36a836" stroke-width="3.2"/><path d="M7 9.5v6.5h6.5z" fill="#3cb83c" stroke="#1d861d" stroke-width="0.5"/><rect x="11" y="8" width="4.5" height="4" fill="#3cb83c"/></svg>
<div class="t" style="left:470px;top:130px;letter-spacing:0.066px;">Download</div>
<svg class="i" style="left:532px;top:136px;" width="5" height="3" viewBox="0 0 5 3"><path d="M0 0h5l-2.5 3z" fill="#000"/></svg>
<div class="r" style="left:544px;top:126px;width:1px;height:22px;background:#c4c4c4;"></div>
<svg class="i" style="left:550px;top:129px;" width="16" height="16" viewBox="0 0 16 16"><g opacity="0.5"><path d="M0.5 0.5h9l3 3v12h-12z" fill="#f2f2f2" stroke="#aaa"/><path d="M3.5 15l0.8-3.3 8.8-9.4 2.5 2.4-8.8 9.4z" fill="#ddd" stroke="#999" stroke-width="0.7"/></g></svg>
<div class="t" style="left:571px;top:130px;color:#a0a0a0;">Edit</div>
<svg class="i" style="left:599px;top:136px;" width="5" height="3" viewBox="0 0 5 3"><path d="M0 0h5l-2.5 3z" fill="#b0b0b0"/></svg>
<svg class="i" style="left:611px;top:129px;" width="16" height="16" viewBox="0 0 16 16"><path d="M2 3.5l1.5-1.5 4.5 4.5 4.5-4.5 1.5 1.5-4.5 4.5 4.5 4.5-1.5 1.5-4.5-4.5-4.5 4.5-1.5-1.5 4.5-4.5z" fill="#e8302c" stroke="#b3161a" stroke-width="1.2" stroke-linejoin="round"/></svg>
<svg class="i" style="left:634px;top:129px;" width="16" height="16" viewBox="0 0 16 16"><rect x="0.5" y="8.5" width="15" height="7" fill="url(#gB)" stroke="#4f77aa"/><path d="M2.5 11l2 2.5M4.5 11l-2 2.5" stroke="#3a5a86" stroke-width="0.9"/><path d="M6 14.5l0.6-2.8 6.2-10 2.2 1.4-6.2 10z" fill="#f5c93f" stroke="#8a6308" stroke-width="0.7"/><path d="M12.8 1.7l0.8-1.2 2.2 1.4-0.8 1.2z" fill="#d8383a"/></svg>
<svg class="i" style="left:657px;top:129px;" width="16" height="16" viewBox="0 0 16 16"><path d="M0.5 0.5h6.5l3 3v9h-9.5z" fill="url(#gB)" stroke="#5a7eaa"/><path d="M7 0.5v3h3" fill="none" stroke="#5a7eaa"/><rect x="7.5" y="7.5" width="8" height="8" fill="url(#gB)" stroke="#5a7eaa"/><path d="M9.2 11.5l1.6 2 3-4" stroke="#1fa01f" stroke-width="1.6" fill="none"/></svg>
<div class="t" style="left:678px;top:130px;letter-spacing:-0.109px;">Properties</div>
<div class="r" style="left:739px;top:126px;width:1px;height:22px;background:#c4c4c4;"></div>
<svg class="i" style="left:745px;top:129px;" width="16" height="16" viewBox="0 0 16 16"><g transform="translate(0,2)"><path d="M0.5 12.5V1.5q0-1 1-1h4.8500000000000005l1.5 2H12.5V12.5z" fill="#f3c93e" stroke="#c8932a"/><rect x="0.5" y="4.2" width="12" height="8.3" fill="url(#gF)" stroke="#c8932a"/><rect x="1" y="4.7" width="11" height="1.2" fill="#fff8d8"/></g><path d="M11.5 0.3l0.9 1.6 1.8-0.5 0 1.8 1.7 0.8-1.2 1.4 0.9 1.6-1.8 0.4-0.4 1.8-1.6-0.9-1.4 1.2-0.7-1.7-1.8 0.1 0.5-1.8-1.6-0.9 1.4-1.2-0.8-1.7 1.8 0z" fill="#dfe8f3" stroke="#667f9e" stroke-width="0.7"/><circle cx="11.5" cy="4.5" r="1.2" fill="#fff"/></svg>
<div class="t" style="left:767px;top:130px;letter-spacing:0.128px;">New</div>
<svg class="i" style="left:796px;top:136px;" width="5" height="3" viewBox="0 0 5 3"><path d="M0 0h5l-2.5 3z" fill="#000"/></svg>
<svg class="i" style="left:811px;top:130px;" width="3" height="14" viewBox="0 0 3 14"><rect x="0" y="0" width="3" height="1" fill="#a9a9a9"/><rect x="0" y="2" width="3" height="1" fill="#a9a9a9"/><rect x="0" y="4" width="3" height="1" fill="#a9a9a9"/><rect x="0" y="6" width="3" height="1" fill="#a9a9a9"/><rect x="0" y="8" width="3" height="1" fill="#a9a9a9"/><rect x="0" y="10" width="3" height="1" fill="#a9a9a9"/><rect x="0" y="12" width="3" height="1" fill="#a9a9a9"/></svg>
<svg class="i" style="left:819px;top:130px;" width="14" height="14" viewBox="0 0 14 14"><rect x="0.5" y="0.5" width="13" height="13" fill="url(#gB)" stroke="#4a6d99"/><path d="M7 3v8M3 7h8" stroke="#3e5f8e" stroke-width="2.2"/></svg>
<svg class="i" style="left:842px;top:130px;" width="14" height="14" viewBox="0 0 14 14"><rect x="0.5" y="0.5" width="13" height="13" fill="#f4f4f4" stroke="#c9c9c9"/><path d="M3 7h8" stroke="#c9c9c9" stroke-width="2.2"/></svg>
<svg class="i" style="left:865px;top:130px;" width="14" height="14" viewBox="0 0 14 14"><rect x="0.5" y="0.5" width="13" height="13" fill="url(#gB)" stroke="#4a6d99"/><path d="M2.8 3h8.4l-4.2 8.5z" fill="none" stroke="#3e5f8e" stroke-width="1.6" stroke-linejoin="round"/><path d="M4.3 5.5h5.4" stroke="#3e5f8e" stroke-width="1.3"/></svg>
<div class="r" style="left:0px;top:150px;width:433px;height:21px;background:#bfcddb;"></div>
<div class="t" style="left:4px;top:154px;letter-spacing:-0.125px;">C:\TFTP-Root\firmware cisco\7940-60 SIP\</div>
<div class="r" style="left:433px;top:150px;width:5px;height:419px;background:#f0f0f0;"></div>
<div class="r" style="left:438px;top:150px;width:889px;height:21px;background:#99b4d1;"></div>
<div class="t" style="left:443px;top:154px;letter-spacing:0.689px;">/</div>
<div class="r" style="left:0px;top:171px;width:433px;height:398px;background:#fff;"></div>
<div class="r" style="left:0px;top:171px;width:433px;height:1px;background:#828790;"></div>
<div class="r" style="left:432px;top:171px;width:1px;height:398px;background:#828790;"></div>
<div class="r" style="left:438px;top:171px;width:889px;height:398px;background:#fff;"></div>
<div class="r" style="left:438px;top:171px;width:889px;height:1px;background:#828790;"></div>
<div class="r" style="left:438px;top:171px;width:1px;height:398px;background:#828790;"></div>
<div class="t" style="left:6px;top:178px;letter-spacing:0.072px;">Name</div>
<svg class="i" style="left:146px;top:173px;" width="8" height="5" viewBox="0 0 8 5"><path d="M0.5 4.5l3.5-3.5 3.5 3.5" stroke="#555" fill="none"/></svg>
<div class="r" style="left:298px;top:173px;width:1px;height:24px;background:#e5e5e5;"></div>
<div class="r" style="left:0;top:172px;width:432px;height:30px;overflow:hidden">
<div class="t" style="left:418px;top:6px;letter-spacing:-0.073px;">Size</div>
</div>
<div class="r" style="left:1px;top:197px;width:1px;height:372px;background:#d3e4fa;"></div>
<div class="r" style="left:298px;top:197px;width:1px;height:372px;background:#eaf3fd;"></div>
<svg class="i" style="left:6px;top:198px;" width="16" height="16" viewBox="0 0 16 16"><rect x="0.5" y="0.5" width="11" height="15" fill="#fde593" stroke="#e9c545"/><rect x="1.5" y="1.5" width="9" height="13" fill="none" stroke="#fff0b8" stroke-width="0.8"/><rect x="10.5" y="9.5" width="2" height="6" fill="#fde593" stroke="#e9c545"/><path d="M0.8 9.8L3.5 6.8 6.2 9.8z" fill="#2e3440"/><path d="M3.5 9v3.3H9" stroke="#2e3440" stroke-width="1.3" fill="none"/></svg>
<div class="t" style="left:22px;top:200px;letter-spacing:0.689px;">..</div>
<div class="r" style="left:4px;top:216px;width:293px;height:19px;background:#d9d9d9;"></div>
<svg class="i" style="left:4px;top:217px;" width="16" height="16" viewBox="0 0 16 16"><defs><linearGradient id="gX" x1="0" y1="0" x2="0" y2="1"><stop offset="0" stop-color="#e4f3a0"/><stop offset="1" stop-color="#2f9a1e"/></linearGradient></defs><rect x="0.5" y="2.5" width="12" height="13" fill="#fff" stroke="#4d4d4d"/><path d="M2.5 1.5v2M5 1.5v2M7.5 1.5v2" stroke="#555" stroke-width="1.2"/><rect x="2" y="7" width="9" height="7" fill="url(#gX)"/><path d="M8 14.2l6.3-11.5" stroke="#e8a823" stroke-width="2.4"/><path d="M7.3 15.3l0.4-2.2 1.4 0.8z" fill="#333"/><rect x="13.6" y="0.4" width="2.2" height="2.6" fill="#9c1016"/></svg>
<div class="t" style="left:22px;top:219px;letter-spacing:-0.059px;">7960-tones.xml</div>
<div class="t" style="left:130px;top:219px;width:300px;text-align:right;">2 K</div>
<div class="r" style="left:4px;top:235px;width:293px;height:19px;background:#d9d9d9;"></div>
<svg class="i" style="left:4px;top:236px;" width="16" height="16" viewBox="0 0 16 16"><defs><linearGradient id="gX" x1="0" y1="0" x2="0" y2="1"><stop offset="0" stop-color="#e4f3a0"/><stop offset="1" stop-color="#2f9a1e"/></linearGradient></defs><rect x="0.5" y="2.5" width="12" height="13" fill="#fff" stroke="#4d4d4d"/><path d="M2.5 1.5v2M5 1.5v2M7.5 1.5v2" stroke="#555" stroke-width="1.2"/><rect x="2" y="7" width="9" height="7" fill="url(#gX)"/><path d="M8 14.2l6.3-11.5" stroke="#e8a823" stroke-width="2.4"/><path d="M7.3 15.3l0.4-2.2 1.4 0.8z" fill="#333"/><rect x="13.6" y="0.4" width="2.2" height="2.6" fill="#9c1016"/></svg>
<div class="t" style="left:22px;top:238px;letter-spacing:0.110px;">dialplan.xml</div>
<div class="t" style="left:130px;top:238px;width:300px;text-align:right;">1 K</div>
<div class="r" style="left:4px;top:254px;width:293px;height:19px;background:#d9d9d9;"></div>
<svg class="i" style="left:6px;top:255px;" width="16" height="16" viewBox="0 0 16 16"><path d="M0.5 0.5h8l3 3v12h-11z" fill="#fbfbfb" stroke="#767676"/><path d="M8.5 0.5v3h3" fill="#fff" stroke="#767676"/><defs><linearGradient id="gR" x1="0" y1="0" x2="0" y2="1"><stop offset="0" stop-color="#2f7fe0"/><stop offset="1" stop-color="#1aa4f0"/></linearGradient></defs><rect x="3" y="5" width="6" height="6" fill="url(#gR)"/><path d="M3 11l2.5-3 3.5 3z" fill="#9fdcff"/></svg>
<div class="t" style="left:22px;top:257px;letter-spacing:-0.049px;">MusicBox.raw</div>
<div class="t" style="left:130px;top:257px;width:300px;text-align:right;">13 K</div>
<div class="r" style="left:4px;top:273px;width:293px;height:19px;background:#d9d9d9;"></div>
<svg class="i" style="left:6px;top:274px;" width="16" height="16" viewBox="0 0 16 16"><path d="M0.5 0.5h8l3 3v12h-11z" fill="#fbfbfb" stroke="#767676"/><path d="M8.5 0.5v3h3" fill="#fff" stroke="#767676"/><defs><linearGradient id="gR" x1="0" y1="0" x2="0" y2="1"><stop offset="0" stop-color="#2f7fe0"/><stop offset="1" stop-color="#1aa4f0"/></linearGradient></defs><rect x="3" y="5" width="6" height="6" fill="url(#gR)"/><path d="M3 11l2.5-3 3.5 3z" fill="#9fdcff"/></svg>
<div class="t" style="left:22px;top:276px;letter-spacing:-0.029px;">Neuro.raw</div>
<div class="t" style="left:130px;top:276px;width:300px;text-align:right;">16 K</div>
<div class="r" style="left:4px;top:292px;width:293px;height:19px;background:#d9d9d9;"></div>
<svg class="i" style="left:6px;top:293px;" width="16" height="16" viewBox="0 0 16 16"><path d="M0.5 0.5h8l3 3v12h-11z" fill="#fbfbfb" stroke="#767676"/><path d="M8.5 0.5v3h3" fill="#fff" stroke="#767676"/><defs><linearGradient id="gR" x1="0" y1="0" x2="0" y2="1"><stop offset="0" stop-color="#2f7fe0"/><stop offset="1" stop-color="#1aa4f0"/></linearGradient></defs><rect x="3" y="5" width="6" height="6" fill="url(#gR)"/><path d="M3 11l2.5-3 3.5 3z" fill="#9fdcff"/></svg>
<div class="t" style="left:22px;top:295px;letter-spacing:0.121px;">NyukNyuk.raw</div>
<div class="t" style="left:130px;top:295px;width:300px;text-align:right;">10 K</div>
<div class="r" style="left:4px;top:311px;width:293px;height:19px;background:#d9d9d9;"></div>
<svg class="i" style="left:4px;top:312px;" width="16" height="16" viewBox="0 0 16 16"><defs><linearGradient id="gX" x1="0" y1="0" x2="0" y2="1"><stop offset="0" stop-color="#e4f3a0"/><stop offset="1" stop-color="#2f9a1e"/></linearGradient></defs><rect x="0.5" y="2.5" width="12" height="13" fill="#fff" stroke="#4d4d4d"/><path d="M2.5 1.5v2M5 1.5v2M7.5 1.5v2" stroke="#555" stroke-width="1.2"/><rect x="2" y="7" width="9" height="7" fill="url(#gX)"/><path d="M8 14.2l6.3-11.5" stroke="#e8a823" stroke-width="2.4"/><path d="M7.3 15.3l0.4-2.2 1.4 0.8z" fill="#333"/><rect x="13.6" y="0.4" width="2.2" height="2.6" fill="#9c1016"/></svg>
<div class="t" style="left:22px;top:314px;letter-spacing:-0.426px;">OS79XX.TXT</div>
<div class="t" style="left:130px;top:314px;width:300px;text-align:right;">1 K</div>
<div class="r" style="left:4px;top:330px;width:293px;height:19px;background:#d9d9d9;"></div>
<svg class="i" style="left:6px;top:331px;" width="16" height="16" viewBox="0 0 16 16"><path d="M0.5 0.5h8l3 3v12h-11z" fill="#fbfbfb" stroke="#767676"/><path d="M8.5 0.5v3h3" fill="#fff" stroke="#767676"/></svg>
<div class="t" style="left:22px;top:333px;letter-spacing:-0.237px;">P0S3-08-2-00.loads</div>
<div class="t" style="left:130px;top:333px;width:300px;text-align:right;">1 K</div>
<div class="r" style="left:4px;top:349px;width:293px;height:19px;background:#d9d9d9;"></div>
<svg class="i" style="left:6px;top:350px;" width="16" height="16" viewBox="0 0 16 16"><path d="M0.5 0.5h8l3 3v12h-11z" fill="#fbfbfb" stroke="#767676"/><path d="M8.5 0.5v3h3" fill="#fff" stroke="#767676"/></svg>
<div class="t" style="left:22px;top:352px;letter-spacing:-0.328px;">P0S3-08-2-00.sb2</div>
<div class="t" style="left:130px;top:352px;width:300px;text-align:right;">767 K</div>
<div class="r" style="left:4px;top:368px;width:293px;height:19px;background:#d9d9d9;"></div>
<svg class="i" style="left:4px;top:371px;" width="16" height="16" viewBox="0 0 16 16"><rect x="0.5" y="0.5" width="15" height="11.5" fill="#fff" stroke="#6e6e6e"/><rect x="1" y="1" width="14" height="1.8" fill="#8a8a8a"/><rect x="1" y="3" width="2.5" height="8.5" fill="#eeeeee"/><rect x="5" y="4.5" width="3.8" height="6" fill="#0a72dc"/><path d="M10 5h4M10 7h4M10 9h3" stroke="#7a7a7a"/></svg>
<div class="t" style="left:22px;top:371px;letter-spacing:-0.239px;">P003-08-2-00.bin</div>
<div class="t" style="left:130px;top:371px;width:300px;text-align:right;">127 K</div>
<div class="r" style="left:4px;top:387px;width:293px;height:19px;background:#d9d9d9;"></div>
<svg class="i" style="left:6px;top:388px;" width="16" height="16" viewBox="0 0 16 16"><path d="M0.5 0.5h8l3 3v12h-11z" fill="#fbfbfb" stroke="#767676"/><path d="M8.5 0.5v3h3" fill="#fff" stroke="#767676"/></svg>
<div class="t" style="left:22px;top:390px;letter-spacing:-0.282px;">P003-08-2-00.sbn</div>
<div class="t" style="left:130px;top:390px;width:300px;text-align:right;">127 K</div>
<div class="r" style="left:4px;top:406px;width:293px;height:19px;background:#d9d9d9;"></div>
<svg class="i" style="left:6px;top:407px;" width="16" height="16" viewBox="0 0 16 16"><path d="M0.5 0.5h8l3 3v12h-11z" fill="#fbfbfb" stroke="#767676"/><path d="M8.5 0.5v3h3" fill="#fff" stroke="#767676"/></svg>
<div class="t" style="left:22px;top:409px;letter-spacing:0.063px;">Piano1.pcm</div>
<div class="t" style="left:130px;top:409px;width:300px;text-align:right;">8 K</div>
<div class="r" style="left:4px;top:425px;width:293px;height:19px;background:#d9d9d9;"></div>
<svg class="i" style="left:6px;top:426px;" width="16" height="16" viewBox="0 0 16 16"><path d="M0.5 0.5h8l3 3v12h-11z" fill="#fbfbfb" stroke="#767676"/><path d="M8.5 0.5v3h3" fill="#fff" stroke="#767676"/></svg>
<div class="t" style="left:22px;top:428px;letter-spacing:0.063px;">Piano2.pcm</div>
<div class="t" style="left:130px;top:428px;width:300px;text-align:right;">15 K</div>
<div class="r" style="left:4px;top:444px;width:293px;height:19px;background:#d9d9d9;"></div>
<svg class="i" style="left:6px;top:445px;" width="16" height="16" viewBox="0 0 16 16"><path d="M0.5 0.5h8l3 3v12h-11z" fill="#fbfbfb" stroke="#767676"/><path d="M8.5 0.5v3h3" fill="#fff" stroke="#767676"/><defs><linearGradient id="gR" x1="0" y1="0" x2="0" y2="1"><stop offset="0" stop-color="#2f7fe0"/><stop offset="1" stop-color="#1aa4f0"/></linearGradient></defs><rect x="3" y="5" width="6" height="6" fill="url(#gR)"/><path d="M3 11l2.5-3 3.5 3z" fill="#9fdcff"/></svg>
<div class="t" style="left:22px;top:447px;letter-spacing:0.130px;">Pop.raw</div>
<div class="t" style="left:130px;top:447px;width:300px;text-align:right;">10 K</div>
<div class="r" style="left:4px;top:463px;width:293px;height:19px;background:#d9d9d9;"></div>
<svg class="i" style="left:6px;top:464px;" width="16" height="16" viewBox="0 0 16 16"><path d="M0.5 0.5h8l3 3v12h-11z" fill="#fbfbfb" stroke="#767676"/><path d="M8.5 0.5v3h3" fill="#fff" stroke="#767676"/><defs><linearGradient id="gR" x1="0" y1="0" x2="0" y2="1"><stop offset="0" stop-color="#2f7fe0"/><stop offset="1" stop-color="#1aa4f0"/></linearGradient></defs><rect x="3" y="5" width="6" height="6" fill="url(#gR)"/><path d="M3 11l2.5-3 3.5 3z" fill="#9fdcff"/></svg>
<div class="t" style="left:22px;top:466px;letter-spacing:-0.120px;">Pulse1.raw</div>
<div class="t" style="left:130px;top:466px;width:300px;text-align:right;">8 K</div>
<div class="r" style="left:4px;top:482px;width:293px;height:19px;background:#d9d9d9;"></div>
<svg class="i" style="left:6px;top:483px;" width="16" height="16" viewBox="0 0 16 16"><path d="M0.5 0.5h8l3 3v12h-11z" fill="#fbfbfb" stroke="#767676"/><path d="M8.5 0.5v3h3" fill="#fff" stroke="#767676"/></svg>
<div class="t" style="left:22px;top:485px;letter-spacing:0.043px;">ringer1.pcm</div>
<div class="t" style="left:130px;top:485px;width:300px;text-align:right;">16 K</div>
<div class="r" style="left:4px;top:501px;width:293px;height:19px;background:#d9d9d9;"></div>
<svg class="i" style="left:6px;top:502px;" width="16" height="16" viewBox="0 0 16 16"><path d="M0.5 0.5h8l3 3v12h-11z" fill="#fbfbfb" stroke="#767676"/><path d="M8.5 0.5v3h3" fill="#fff" stroke="#767676"/></svg>
<div class="t" style="left:22px;top:504px;letter-spacing:0.043px;">ringer2.pcm</div>
<div class="t" style="left:130px;top:504px;width:300px;text-align:right;">8 K</div>
<div class="r" style="left:4px;top:520px;width:293px;height:19px;background:#d9d9d9;"></div>
<svg class="i" style="left:6px;top:521px;" width="16" height="16" viewBox="0 0 16 16"><path d="M0.5 0.5h8l3 3v12h-11z" fill="#fbfbfb" stroke="#767676"/><path d="M8.5 0.5v3h3" fill="#fff" stroke="#767676"/></svg>
<div class="t" style="left:22px;top:523px;letter-spacing:0.043px;">ringer3.pcm</div>
<div class="t" style="left:130px;top:523px;width:300px;text-align:right;">8 K</div>
<div class="r" style="left:4px;top:539px;width:293px;height:19px;background:#d9d9d9;"></div>
<svg class="i" style="left:6px;top:540px;" width="16" height="16" viewBox="0 0 16 16"><path d="M0.5 0.5h8l3 3v12h-11z" fill="#fbfbfb" stroke="#767676"/><path d="M8.5 0.5v3h3" fill="#fff" stroke="#767676"/></svg>
<div class="t" style="left:22px;top:542px;letter-spacing:0.043px;">ringer4.pcm</div>
<div class="t" style="left:130px;top:542px;width:300px;text-align:right;">16 K</div>
<div class="r" style="left:4px;top:558px;width:293px;height:19px;background:#d9d9d9;"></div>
<svg class="i" style="left:4px;top:559px;" width="16" height="16" viewBox="0 0 16 16"><defs><linearGradient id="gD" x1="0" y1="0" x2="0" y2="1"><stop offset="0" stop-color="#fff200"/><stop offset="1" stop-color="#ff7a00"/></linearGradient></defs><rect x="1" y="1" width="15" height="14" fill="#333"/><path d="M1.5 2v13h13z" fill="url(#gD)"/><path d="M14.5 2.5v12.5l-6-6z" fill="#b9b0dc"/><path d="M1.5 2l13 13" stroke="#d01010" stroke-width="1"/><rect x="0.5" y="0.5" width="15" height="15" fill="none" stroke="#000"/></svg>
<div class="t" style="left:22px;top:561px;letter-spacing:-0.661px;">RINGLIST.DAT</div>
<div class="t" style="left:130px;top:561px;width:300px;text-align:right;">1 K</div>
<div class="t" style="left:446px;top:178px;letter-spacing:0.072px;">Name</div>
<svg class="i" style="left:615px;top:173px;" width="8" height="5" viewBox="0 0 8 5"><path d="M0.5 4.5l3.5-3.5 3.5 3.5" stroke="#555" fill="none"/></svg>
<div class="t" style="left:561px;top:178px;width:300px;text-align:right;letter-spacing:-0.073px;">Size</div>
<div class="t" style="left:873px;top:178px;letter-spacing:0.151px;">Changed</div>
<div class="t" style="left:1024px;top:178px;letter-spacing:-0.269px;">Rights</div>
<div class="t" style="left:1102px;top:178px;">Owner</div>
<div class="r" style="left:796px;top:173px;width:1px;height:24px;background:#e5e5e5;"></div>
<div class="r" style="left:866px;top:173px;width:1px;height:24px;background:#e5e5e5;"></div>
<div class="r" style="left:1016px;top:173px;width:1px;height:24px;background:#e5e5e5;"></div>
<div class="r" style="left:1095px;top:173px;width:1px;height:24px;background:#e5e5e5;"></div>
<div class="r" style="left:1157px;top:173px;width:1px;height:24px;background:#e5e5e5;"></div>
<div class="r" style="left:796px;top:197px;width:1px;height:372px;background:#eaf3fd;"></div>
<div class="r" style="left:866px;top:197px;width:1px;height:372px;background:#eaf3fd;"></div>
<div class="r" style="left:1016px;top:197px;width:1px;height:372px;background:#eaf3fd;"></div>
<div class="r" style="left:1095px;top:197px;width:1px;height:372px;background:#eaf3fd;"></div>
<div class="r" style="left:1157px;top:197px;width:1px;height:372px;background:#eaf3fd;"></div>
<div class="r" style="left:441px;top:197px;width:1px;height:372px;background:#c6defa;"></div>
<svg class="i" style="left:446px;top:198px;" width="16" height="16" viewBox="0 0 16 16"><rect x="0.5" y="0.5" width="11" height="15" fill="#fde593" stroke="#e9c545"/><rect x="1.5" y="1.5" width="9" height="13" fill="none" stroke="#fff0b8" stroke-width="0.8"/><rect x="10.5" y="9.5" width="2" height="6" fill="#fde593" stroke="#e9c545"/><path d="M0.8 9.8L3.5 6.8 6.2 9.8z" fill="#2e3440"/><path d="M3.5 9v3.3H9" stroke="#2e3440" stroke-width="1.3" fill="none"/></svg>
<div class="t" style="left:462px;top:200px;letter-spacing:0.689px;">..</div>
<div class="t" style="left:873px;top:200px;letter-spacing:-0.343px;">12/14/2023 9:24:45 PM</div>
<div class="t" style="left:1024px;top:200px;letter-spacing:0.208px;">r-xr-xr-x</div>
<div class="t" style="left:1102px;top:200px;letter-spacing:-0.032px;">root</div>
<svg class="i" style="left:446px;top:217px;" width="16" height="16" viewBox="0 0 16 16"><rect x="0.5" y="0.5" width="11" height="15" fill="#fde593" stroke="#e9c545"/><rect x="1.5" y="1.5" width="9" height="13" fill="none" stroke="#fff0b8" stroke-width="0.8"/><rect x="10.5" y="9.5" width="2" height="6" fill="#fde593" stroke="#e9c545"/></svg>
<svg class="i" style="left:444px;top:223px;" width="10" height="10" viewBox="0 0 10 10"><rect x="0.5" y="0.5" width="9" height="9" fill="#fff" stroke="#7a7a7a"/><path d="M3 7.8c0-2.5 1-3.6 3.2-3.8" stroke="#0f3f9e" stroke-width="2.1" fill="none" stroke-linecap="round"/><path d="M4.6 1.6h3.9v3.9z" fill="#0f3f9e" stroke="#0f3f9e" stroke-width="0.6" stroke-linejoin="round"/></svg>
<div class="t" style="left:462px;top:219px;letter-spacing:0.064px;">bin</div>
<div class="t" style="left:873px;top:219px;letter-spacing:-0.433px;">03/31/2023 3:02:14 AM</div>
<div class="t" style="left:1024px;top:219px;letter-spacing:0.064px;">rwxrwxrwx</div>
<div class="t" style="left:1102px;top:219px;letter-spacing:-0.032px;">root</div>
<svg class="i" style="left:446px;top:236px;" width="16" height="16" viewBox="0 0 16 16"><rect x="0.5" y="0.5" width="11" height="15" fill="#fde593" stroke="#e9c545"/><rect x="1.5" y="1.5" width="9" height="13" fill="none" stroke="#fff0b8" stroke-width="0.8"/><rect x="10.5" y="9.5" width="2" height="6" fill="#fde593" stroke="#e9c545"/></svg>
<div class="t" style="left:462px;top:238px;letter-spacing:0.112px;">boot</div>
<div class="t" style="left:873px;top:238px;letter-spacing:-0.433px;">03/31/2023 3:17:30 AM</div>
<div class="t" style="left:1024px;top:238px;letter-spacing:0.208px;">r-xr-xr-x</div>
<div class="t" style="left:1102px;top:238px;letter-spacing:-0.032px;">root</div>
<svg class="i" style="left:446px;top:255px;" width="16" height="16" viewBox="0 0 16 16"><rect x="0.5" y="0.5" width="11" height="15" fill="#fde593" stroke="#e9c545"/><rect x="1.5" y="1.5" width="9" height="13" fill="none" stroke="#fff0b8" stroke-width="0.8"/><rect x="10.5" y="9.5" width="2" height="6" fill="#fde593" stroke="#e9c545"/></svg>
<div class="t" style="left:462px;top:257px;letter-spacing:0.256px;">dev</div>
<div class="t" style="left:873px;top:257px;letter-spacing:-0.433px;">12/14/2023 9:25:11 PM</div>
<div class="t" style="left:1024px;top:257px;letter-spacing:0.160px;">rwxr-xr-x</div>
<div class="t" style="left:1102px;top:257px;letter-spacing:-0.032px;">root</div>
<svg class="i" style="left:446px;top:274px;" width="16" height="16" viewBox="0 0 16 16"><rect x="0.5" y="0.5" width="11" height="15" fill="#fde593" stroke="#e9c545"/><rect x="1.5" y="1.5" width="9" height="13" fill="none" stroke="#fff0b8" stroke-width="0.8"/><rect x="10.5" y="9.5" width="2" height="6" fill="#fde593" stroke="#e9c545"/></svg>
<div class="t" style="left:462px;top:276px;letter-spacing:0.064px;">etc</div>
<div class="t" style="left:873px;top:276px;letter-spacing:-0.433px;">12/14/2023 7:09:38 PM</div>
<div class="t" style="left:1024px;top:276px;letter-spacing:0.160px;">rwxr-xr-x</div>
<div class="t" style="left:1102px;top:276px;letter-spacing:-0.032px;">root</div>
<svg class="i" style="left:446px;top:293px;" width="16" height="16" viewBox="0 0 16 16"><rect x="0.5" y="0.5" width="11" height="15" fill="#fde593" stroke="#e9c545"/><rect x="1.5" y="1.5" width="9" height="13" fill="none" stroke="#fff0b8" stroke-width="0.8"/><rect x="10.5" y="9.5" width="2" height="6" fill="#fde593" stroke="#e9c545"/></svg>
<div class="t" style="left:462px;top:295px;letter-spacing:0.256px;">home</div>
<div class="t" style="left:873px;top:295px;letter-spacing:-0.433px;">03/31/2023 3:06:23 AM</div>
<div class="t" style="left:1024px;top:295px;letter-spacing:0.160px;">rwxr-xr-x</div>
<div class="t" style="left:1102px;top:295px;letter-spacing:-0.032px;">root</div>
<svg class="i" style="left:446px;top:312px;" width="16" height="16" viewBox="0 0 16 16"><rect x="0.5" y="0.5" width="11" height="15" fill="#fde593" stroke="#e9c545"/><rect x="1.5" y="1.5" width="9" height="13" fill="none" stroke="#fff0b8" stroke-width="0.8"/><rect x="10.5" y="9.5" width="2" height="6" fill="#fde593" stroke="#e9c545"/></svg>
<svg class="i" style="left:444px;top:318px;" width="10" height="10" viewBox="0 0 10 10"><rect x="0.5" y="0.5" width="9" height="9" fill="#fff" stroke="#7a7a7a"/><path d="M3 7.8c0-2.5 1-3.6 3.2-3.8" stroke="#0f3f9e" stroke-width="2.1" fill="none" stroke-linecap="round"/><path d="M4.6 1.6h3.9v3.9z" fill="#0f3f9e" stroke="#0f3f9e" stroke-width="0.6" stroke-linejoin="round"/></svg>
<div class="t" style="left:462px;top:314px;letter-spacing:-0.129px;">lib</div>
<div class="t" style="left:873px;top:314px;letter-spacing:-0.433px;">03/31/2023 3:02:14 AM</div>
<div class="t" style="left:1024px;top:314px;letter-spacing:0.064px;">rwxrwxrwx</div>
<div class="t" style="left:1102px;top:314px;letter-spacing:-0.032px;">root</div>
<svg class="i" style="left:446px;top:331px;" width="16" height="16" viewBox="0 0 16 16"><rect x="0.5" y="0.5" width="11" height="15" fill="#fde593" stroke="#e9c545"/><rect x="1.5" y="1.5" width="9" height="13" fill="none" stroke="#fff0b8" stroke-width="0.8"/><rect x="10.5" y="9.5" width="2" height="6" fill="#fde593" stroke="#e9c545"/></svg>
<svg class="i" style="left:444px;top:337px;" width="10" height="10" viewBox="0 0 10 10"><rect x="0.5" y="0.5" width="9" height="9" fill="#fff" stroke="#7a7a7a"/><path d="M3 7.8c0-2.5 1-3.6 3.2-3.8" stroke="#0f3f9e" stroke-width="2.1" fill="none" stroke-linecap="round"/><path d="M4.6 1.6h3.9v3.9z" fill="#0f3f9e" stroke="#0f3f9e" stroke-width="0.6" stroke-linejoin="round"/></svg>
<div class="t" style="left:462px;top:333px;letter-spacing:-0.392px;">lib64</div>
<div class="t" style="left:873px;top:333px;letter-spacing:-0.433px;">03/31/2023 3:02:14 AM</div>
<div class="t" style="left:1024px;top:333px;letter-spacing:0.064px;">rwxrwxrwx</div>
<div class="t" style="left:1102px;top:333px;letter-spacing:-0.032px;">root</div>
<svg class="i" style="left:446px;top:350px;" width="16" height="16" viewBox="0 0 16 16"><rect x="0.5" y="0.5" width="11" height="15" fill="#fde593" stroke="#e9c545"/><rect x="1.5" y="1.5" width="9" height="13" fill="none" stroke="#fff0b8" stroke-width="0.8"/><rect x="10.5" y="9.5" width="2" height="6" fill="#fde593" stroke="#e9c545"/></svg>
<div class="t" style="left:462px;top:352px;letter-spacing:0.130px;">lost+found</div>
<div class="t" style="left:873px;top:352px;letter-spacing:-0.433px;">03/31/2023 3:01:39 AM</div>
<div class="t" style="left:1024px;top:352px;letter-spacing:0.481px;">rwx------</div>
<div class="t" style="left:1102px;top:352px;letter-spacing:-0.032px;">root</div>
<svg class="i" style="left:446px;top:369px;" width="16" height="16" viewBox="0 0 16 16"><rect x="0.5" y="0.5" width="11" height="15" fill="#fde593" stroke="#e9c545"/><rect x="1.5" y="1.5" width="9" height="13" fill="none" stroke="#fff0b8" stroke-width="0.8"/><rect x="10.5" y="9.5" width="2" height="6" fill="#fde593" stroke="#e9c545"/></svg>
<div class="t" style="left:462px;top:371px;letter-spacing:0.141px;">media</div>
<div class="t" style="left:873px;top:371px;letter-spacing:-0.433px;">04/11/2018 8:29:55 AM</div>
<div class="t" style="left:1024px;top:371px;letter-spacing:0.160px;">rwxr-xr-x</div>
<div class="t" style="left:1102px;top:371px;letter-spacing:-0.032px;">root</div>
<svg class="i" style="left:446px;top:388px;" width="16" height="16" viewBox="0 0 16 16"><rect x="0.5" y="0.5" width="11" height="15" fill="#fde593" stroke="#e9c545"/><rect x="1.5" y="1.5" width="9" height="13" fill="none" stroke="#fff0b8" stroke-width="0.8"/><rect x="10.5" y="9.5" width="2" height="6" fill="#fde593" stroke="#e9c545"/></svg>
<div class="t" style="left:462px;top:390px;letter-spacing:0.064px;">mnt</div>
<div class="t" style="left:873px;top:390px;letter-spacing:-0.433px;">04/11/2018 8:29:55 AM</div>
<div class="t" style="left:1024px;top:390px;letter-spacing:0.160px;">rwxr-xr-x</div>
<div class="t" style="left:1102px;top:390px;letter-spacing:-0.032px;">root</div>
<svg class="i" style="left:446px;top:407px;" width="16" height="16" viewBox="0 0 16 16"><rect x="0.5" y="0.5" width="11" height="15" fill="#fde593" stroke="#e9c545"/><rect x="1.5" y="1.5" width="9" height="13" fill="none" stroke="#fff0b8" stroke-width="0.8"/><rect x="10.5" y="9.5" width="2" height="6" fill="#fde593" stroke="#e9c545"/></svg>
<div class="t" style="left:462px;top:409px;letter-spacing:0.064px;">opt</div>
<div class="t" style="left:873px;top:409px;letter-spacing:-0.433px;">03/31/2023 3:06:43 AM</div>
<div class="t" style="left:1024px;top:409px;letter-spacing:0.160px;">rwxr-xr-x</div>
<div class="t" style="left:1102px;top:409px;letter-spacing:-0.032px;">root</div>
<svg class="i" style="left:446px;top:426px;" width="16" height="16" viewBox="0 0 16 16"><rect x="0.5" y="0.5" width="11" height="15" fill="#fde593" stroke="#e9c545"/><rect x="1.5" y="1.5" width="9" height="13" fill="none" stroke="#fff0b8" stroke-width="0.8"/><rect x="10.5" y="9.5" width="2" height="6" fill="#fde593" stroke="#e9c545"/></svg>
<div class="t" style="left:462px;top:428px;letter-spacing:0.112px;">proc</div>
<div class="t" style="left:873px;top:428px;letter-spacing:-0.433px;">12/14/2023 9:24:55 PM</div>
<div class="t" style="left:1024px;top:428px;letter-spacing:0.208px;">r-xr-xr-x</div>
<div class="t" style="left:1102px;top:428px;letter-spacing:-0.032px;">root</div>
<svg class="i" style="left:446px;top:445px;" width="16" height="16" viewBox="0 0 16 16"><rect x="0.5" y="0.5" width="11" height="15" fill="#fde593" stroke="#e9c545"/><rect x="1.5" y="1.5" width="9" height="13" fill="none" stroke="#fff0b8" stroke-width="0.8"/><rect x="10.5" y="9.5" width="2" height="6" fill="#fde593" stroke="#e9c545"/></svg>
<div class="t" style="left:462px;top:447px;letter-spacing:-0.032px;">root</div>
<div class="t" style="left:873px;top:447px;letter-spacing:-0.449px;">03/30/2023 11:54:21 PM</div>
<div class="t" style="left:1024px;top:447px;letter-spacing:0.368px;">r-xr-x---</div>
<div class="t" style="left:1102px;top:447px;letter-spacing:-0.032px;">root</div>
<svg class="i" style="left:446px;top:464px;" width="16" height="16" viewBox="0 0 16 16"><rect x="0.5" y="0.5" width="11" height="15" fill="#fde593" stroke="#e9c545"/><rect x="1.5" y="1.5" width="9" height="13" fill="none" stroke="#fff0b8" stroke-width="0.8"/><rect x="10.5" y="9.5" width="2" height="6" fill="#fde593" stroke="#e9c545"/></svg>
<div class="t" style="left:462px;top:466px;letter-spacing:0.064px;">run</div>
<div class="t" style="left:873px;top:466px;letter-spacing:-0.433px;">12/14/2023 7:09:31 PM</div>
<div class="t" style="left:1024px;top:466px;letter-spacing:0.160px;">rwxr-xr-x</div>
<div class="t" style="left:1102px;top:466px;letter-spacing:-0.032px;">root</div>
<svg class="i" style="left:446px;top:483px;" width="16" height="16" viewBox="0 0 16 16"><rect x="0.5" y="0.5" width="11" height="15" fill="#fde593" stroke="#e9c545"/><rect x="1.5" y="1.5" width="9" height="13" fill="none" stroke="#fff0b8" stroke-width="0.8"/><rect x="10.5" y="9.5" width="2" height="6" fill="#fde593" stroke="#e9c545"/></svg>
<svg class="i" style="left:444px;top:489px;" width="10" height="10" viewBox="0 0 10 10"><rect x="0.5" y="0.5" width="9" height="9" fill="#fff" stroke="#7a7a7a"/><path d="M3 7.8c0-2.5 1-3.6 3.2-3.8" stroke="#0f3f9e" stroke-width="2.1" fill="none" stroke-linecap="round"/><path d="M4.6 1.6h3.9v3.9z" fill="#0f3f9e" stroke="#0f3f9e" stroke-width="0.6" stroke-linejoin="round"/></svg>
<div class="t" style="left:462px;top:485px;letter-spacing:-0.203px;">sbin</div>
<div class="t" style="left:873px;top:485px;letter-spacing:-0.433px;">03/31/2023 3:02:14 AM</div>
<div class="t" style="left:1024px;top:485px;letter-spacing:0.064px;">rwxrwxrwx</div>
<div class="t" style="left:1102px;top:485px;letter-spacing:-0.032px;">root</div>
<svg class="i" style="left:446px;top:502px;" width="16" height="16" viewBox="0 0 16 16"><rect x="0.5" y="0.5" width="11" height="15" fill="#fde593" stroke="#e9c545"/><rect x="1.5" y="1.5" width="9" height="13" fill="none" stroke="#fff0b8" stroke-width="0.8"/><rect x="10.5" y="9.5" width="2" height="6" fill="#fde593" stroke="#e9c545"/></svg>
<div class="t" style="left:462px;top:504px;letter-spacing:-0.356px;">srv</div>
<div class="t" style="left:873px;top:504px;letter-spacing:-0.433px;">04/11/2018 8:29:55 AM</div>
<div class="t" style="left:1024px;top:504px;letter-spacing:0.160px;">rwxr-xr-x</div>
<div class="t" style="left:1102px;top:504px;letter-spacing:-0.032px;">root</div>
<svg class="i" style="left:446px;top:521px;" width="16" height="16" viewBox="0 0 16 16"><rect x="0.5" y="0.5" width="11" height="15" fill="#fde593" stroke="#e9c545"/><rect x="1.5" y="1.5" width="9" height="13" fill="none" stroke="#fff0b8" stroke-width="0.8"/><rect x="10.5" y="9.5" width="2" height="6" fill="#fde593" stroke="#e9c545"/></svg>
<div class="t" style="left:462px;top:523px;letter-spacing:-0.583px;">sys</div>
<div class="t" style="left:873px;top:523px;letter-spacing:-0.433px;">12/14/2023 9:24:56 PM</div>
<div class="t" style="left:1024px;top:523px;letter-spacing:0.208px;">r-xr-xr-x</div>
<div class="t" style="left:1102px;top:523px;letter-spacing:-0.032px;">root</div>
<div class="r" style="left:444px;top:539px;width:351px;height:19px;background:#cce8ff;"></div>
<div class="r" style="left:461px;top:540px;width:49px;height:17px;background:transparent;box-sizing:border-box;border:1px dotted #000;"></div>
<svg class="i" style="left:446px;top:540px;" width="16" height="16" viewBox="0 0 16 16"><rect x="0.5" y="0.5" width="11" height="15" fill="#fde593" stroke="#e9c545"/><rect x="1.5" y="1.5" width="9" height="13" fill="none" stroke="#fff0b8" stroke-width="0.8"/><rect x="10.5" y="9.5" width="2" height="6" fill="#fde593" stroke="#e9c545"/></svg>
<div class="t" style="left:462px;top:542px;letter-spacing:-0.032px;">tftpboot</div>
<div class="t" style="left:873px;top:542px;letter-spacing:-0.433px;">03/31/2023 3:06:41 AM</div>
<div class="t" style="left:1024px;top:542px;letter-spacing:0.064px;">rwxrwxrwx</div>
<div class="t" style="left:1102px;top:542px;letter-spacing:-0.032px;">root</div>
<svg class="i" style="left:446px;top:559px;" width="16" height="16" viewBox="0 0 16 16"><rect x="0.5" y="0.5" width="11" height="15" fill="#fde593" stroke="#e9c545"/><rect x="1.5" y="1.5" width="9" height="13" fill="none" stroke="#fff0b8" stroke-width="0.8"/><rect x="10.5" y="9.5" width="2" height="6" fill="#fde593" stroke="#e9c545"/></svg>
<div class="t" style="left:462px;top:561px;letter-spacing:0.064px;">tmp</div>
<div class="t" style="left:873px;top:561px;letter-spacing:-0.433px;">12/14/2023 6:05:04 PM</div>
<div class="t" style="left:1024px;top:561px;">rwxrwxrwt</div>
<div class="t" style="left:1102px;top:561px;letter-spacing:-0.032px;">root</div>
<div class="r" style="left:496px;top:319px;width:189px;height:231px;background:rgba(0,0,0,0.18);filter:blur(1.5px);"></div>
<div class="r" style="left:494px;top:317px;width:187px;height:229px;background:#fcfcfc;box-sizing:border-box;border:1px solid #a0a0a0;"></div>
<div class="r" style="left:495px;top:318px;width:24px;height:227px;background:#f1f1f1;"></div>
<svg class="i" style="left:499px;top:321px;" width="16" height="16" viewBox="0 0 16 16"><path d="M0.5 14.5V4q0-1 1-1h3.5l1.5 1.5h7v10z" fill="#f7cf45" stroke="#c8932a"/><path d="M7.5 0.5h5l2.5 2.5v7h-7.5z" fill="#f4f8fd" stroke="#6e87a8"/><path d="M0.8 14.5l2-6.5h13l-2 6.5z" fill="url(#gF)" stroke="#c8932a"/></svg>
<div class="t" style="left:526px;top:323px;letter-spacing:-0.161px;">Open</div>
<svg class="i" style="left:499px;top:343px;" width="16" height="16" viewBox="0 0 16 16"><g opacity="0.5"><path d="M0.5 0.5h9l3 3v12h-12z" fill="#f2f2f2" stroke="#aaa"/><path d="M3.5 15l0.8-3.3 8.8-9.4 2.5 2.4-8.8 9.4z" fill="#ddd" stroke="#999" stroke-width="0.7"/></g></svg>
<div class="t" style="left:526px;top:345px;color:#a0a0a0;">Edit</div>
<div class="r" style="left:665px;top:342px;width:1px;height:19px;background:#c8c8c8;"></div>
<svg class="i" style="left:669px;top:347px;" width="4" height="8" viewBox="0 0 4 8"><path d="M0 0l4 4-4 4z" fill="#a0a0a0"/></svg>
<svg class="i" style="left:499px;top:365px;" width="16" height="16" viewBox="0 0 16 16"><path d="M7.5 0.5h5l3 3v9h-8z" fill="#f4f8fd" stroke="#4f77aa"/><path d="M12.5 0.5v3h3" fill="none" stroke="#4f77aa"/><path d="M9 3h3M9 5h5" stroke="#4f77aa"/><path d="M0.5 4.5h6l2 2v9h-8z" fill="#f4f8fd" stroke="#4f77aa"/><path d="M2 8h4.5M2 10h4.5M2 12h4.5M2 14h4.5" stroke="#4f77aa"/><path d="M15 9l-4.5 4.5" stroke="#36a836" stroke-width="3.2"/><path d="M7 9.5v6.5h6.5z" fill="#3cb83c" stroke="#1d861d" stroke-width="0.5"/><rect x="11" y="8" width="4.5" height="4" fill="#3cb83c"/></svg>
<div class="t" style="left:526px;top:367px;letter-spacing:-0.033px;">Download...</div>
<div class="t" style="left:363px;top:367px;width:300px;text-align:right;letter-spacing:-0.700px;">F5</div>
<div class="r" style="left:665px;top:364px;width:1px;height:19px;background:#c8c8c8;"></div>
<svg class="i" style="left:669px;top:369px;" width="4" height="8" viewBox="0 0 4 8"><path d="M0 0l4 4-4 4z" fill="#000"/></svg>
<svg class="i" style="left:499px;top:387px;" width="16" height="16" viewBox="0 0 16 16"><path d="M5.5 0.5h6l3 3v9h-9z" fill="#f4f8fd" stroke="#6d8db5"/><path d="M11.5 0.5v3h3" fill="none" stroke="#6d8db5"/><path d="M2.5 3.5h6l3 3v9h-9z" fill="#f4f8fd" stroke="#6d8db5"/><path d="M5 8h5M5 10h5M5 12h5M5 14h5" stroke="#6d8db5"/><path d="M0.5 9h4v-2.5l4.5 4-4.5 4v-2.5h-4z" fill="#f5c93f" stroke="#b58a12" stroke-width="0.7"/></svg>
<div class="t" style="left:526px;top:389px;letter-spacing:-0.085px;">Duplicate...</div>
<div class="t" style="left:363px;top:389px;width:300px;text-align:right;letter-spacing:-0.064px;">Shift+F5</div>
<svg class="i" style="left:499px;top:409px;" width="16" height="16" viewBox="0 0 16 16"><path d="M5.5 0.5h6l3 3v9h-9z" fill="#f4f8fd" stroke="#6d8db5"/><path d="M11.5 0.5v3h3" fill="none" stroke="#6d8db5"/><path d="M2.5 3.5h6l3 3v9h-9z" fill="#f4f8fd" stroke="#6d8db5"/><path d="M5 8h5M5 10h5M5 12h5M5 14h5" stroke="#6d8db5"/><path d="M0.5 9h4v-2.5l4.5 4-4.5 4v-2.5h-4z" fill="#f5c93f" stroke="#b58a12" stroke-width="0.7"/></svg>
<div class="t" style="left:526px;top:411px;letter-spacing:-0.061px;">Move To...</div>
<div class="t" style="left:363px;top:411px;width:300px;text-align:right;letter-spacing:-0.064px;">Shift+F6</div>
<svg class="i" style="left:499px;top:431px;" width="16" height="16" viewBox="0 0 16 16"><path d="M2 3.5l1.5-1.5 4.5 4.5 4.5-4.5 1.5 1.5-4.5 4.5 4.5 4.5-1.5 1.5-4.5-4.5-4.5 4.5-1.5-1.5 4.5-4.5z" fill="#e8302c" stroke="#b3161a" stroke-width="1.2" stroke-linejoin="round"/></svg>
<div class="t" style="left:526px;top:433px;letter-spacing:-0.215px;">Delete</div>
<div class="t" style="left:363px;top:433px;width:300px;text-align:right;letter-spacing:-0.700px;">F8</div>
<svg class="i" style="left:499px;top:453px;" width="16" height="16" viewBox="0 0 16 16"><rect x="0.5" y="8.5" width="15" height="7" fill="url(#gB)" stroke="#4f77aa"/><path d="M2.5 11l2 2.5M4.5 11l-2 2.5" stroke="#3a5a86" stroke-width="0.9"/><path d="M6 14.5l0.6-2.8 6.2-10 2.2 1.4-6.2 10z" fill="#f5c93f" stroke="#8a6308" stroke-width="0.7"/><path d="M12.8 1.7l0.8-1.2 2.2 1.4-0.8 1.2z" fill="#d8383a"/></svg>
<div class="t" style="left:526px;top:455px;letter-spacing:-0.360px;">Rename</div>
<div class="t" style="left:363px;top:455px;width:300px;text-align:right;letter-spacing:-0.700px;">F2</div>
<div class="r" style="left:526px;top:474px;width:153px;height:1px;background:#c4c4c4;"></div>
<div class="t" style="left:526px;top:480px;letter-spacing:0.015px;">File Custom Commands</div>
<svg class="i" style="left:669px;top:482px;" width="4" height="8" viewBox="0 0 4 8"><path d="M0 0l4 4-4 4z" fill="#000"/></svg>
<div class="t" style="left:526px;top:502px;letter-spacing:-0.191px;">File Names</div>
<svg class="i" style="left:669px;top:504px;" width="4" height="8" viewBox="0 0 4 8"><path d="M0 0l4 4-4 4z" fill="#000"/></svg>
<div class="r" style="left:526px;top:521px;width:153px;height:1px;background:#c4c4c4;"></div>
<div class="r" style="left:496px;top:523px;width:183px;height:22px;background:#b5d7f3;box-sizing:border-box;border:1px solid #0078d7;"></div>
<svg class="i" style="left:499px;top:526px;" width="16" height="16" viewBox="0 0 16 16"><path d="M0.5 0.5h6.5l3 3v9h-9.5z" fill="url(#gB)" stroke="#5a7eaa"/><path d="M7 0.5v3h3" fill="none" stroke="#5a7eaa"/><rect x="7.5" y="7.5" width="8" height="8" fill="url(#gB)" stroke="#5a7eaa"/><path d="M9.2 11.5l1.6 2 3-4" stroke="#1fa01f" stroke-width="1.6" fill="none"/></svg>
<div class="t" style="left:526px;top:527px;letter-spacing:-0.109px;">Properties</div>
<div class="t" style="left:363px;top:527px;width:300px;text-align:right;letter-spacing:-0.700px;">F9</div>
<div class="r" style="left:618px;top:559px;width:210px;height:12px;background:rgba(0,0,0,0.15);filter:blur(1px);"></div>
<div class="r" style="left:616px;top:557px;width:210px;height:14px;background:#fff;box-sizing:border-box;border:1px solid #a8a8a8;border-bottom:none;"></div>
<div class="t" style="left:622px;top:565px;letter-spacing:-0.131px;font-weight:bold;">Properties (F9)</div>
</body></html>
